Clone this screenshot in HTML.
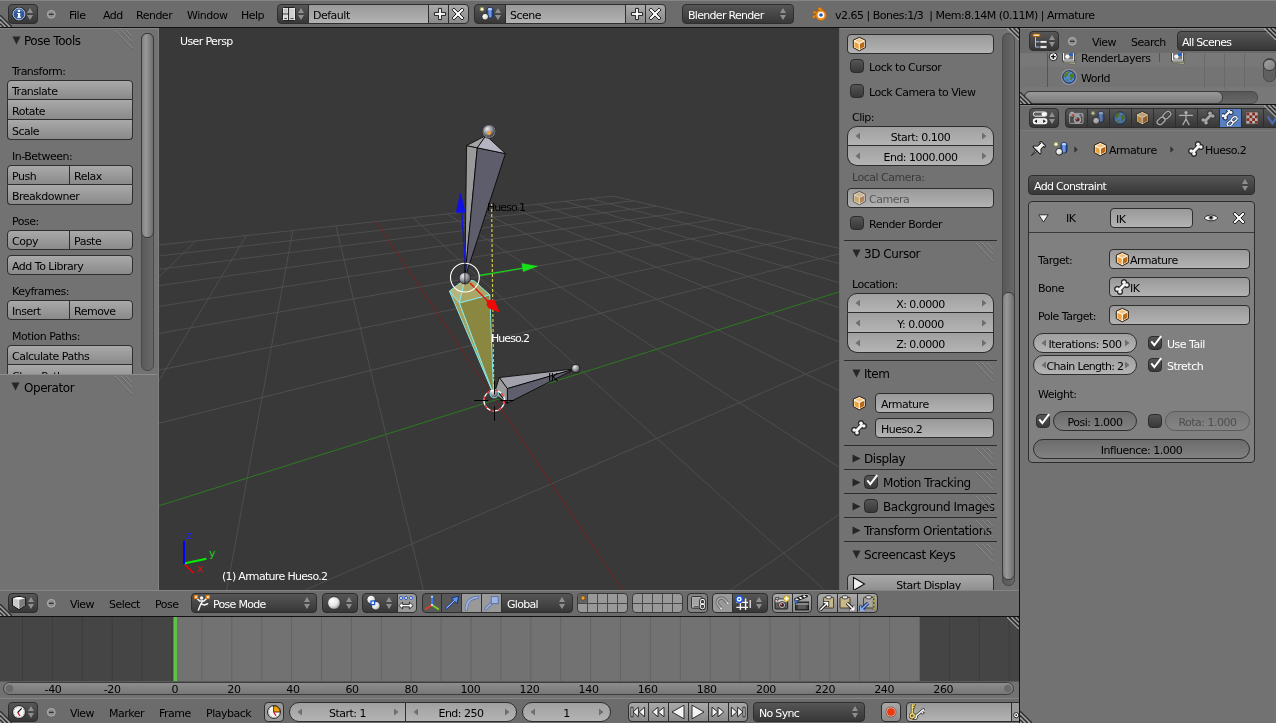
<!DOCTYPE html>
<html><head><meta charset="utf-8"><title>Blender</title>
<style>
html,body{margin:0;padding:0}
body{width:1276px;height:723px;overflow:hidden;background:#727272;position:relative;font:11px "DejaVu Sans","Liberation Sans",sans-serif;letter-spacing:-0.5px;color:#000}
.a{position:absolute;box-sizing:border-box}
.t{white-space:nowrap;line-height:20px;height:20px}
.p{font-size:12px;letter-spacing:-0.45px}
.w{border:1px solid #2e2e2e;border-radius:4px;white-space:nowrap;overflow:hidden;line-height:20px;padding-top:1px;padding-left:4px}
.tool{background:linear-gradient(#a9a9a9,#8a8a8a)}
.tog{background:#999}
.togs{background:#585858;color:#fff}
.num{background:linear-gradient(#a0a0a0,#b4b4b4);border-radius:10px;text-align:center;padding:1px 0 0 0}
.menu{background:linear-gradient(#565656,#373737);color:#fff;letter-spacing:-0.7px}
.txt{background:linear-gradient(#999,#b3b3b3)}
.chk{background:linear-gradient(#555,#383838);border:1px solid #2c2c2c;border-radius:4px}
.dis{opacity:.5}
.wh{color:#fff}
.rl{border-top-right-radius:0;border-bottom-right-radius:0}
.rr{border-top-left-radius:0;border-bottom-left-radius:0}
.rt{border-bottom-left-radius:0;border-bottom-right-radius:0}
.rb{border-top-left-radius:0;border-top-right-radius:0}
.r0{border-radius:0}
.sep{background:#5e5e5e;height:1px}
.sep2{background:#858585;height:1px}
#root{position:absolute;left:0;top:0;width:1276px;height:723px;overflow:hidden;will-change:transform}
.sld{background:linear-gradient(#6c6c6c,#818181)}
.sldd{background:linear-gradient(#787878,#848484);border-color:#5c5c5c;color:#4e4e4e}
.nt{border-top:0 !important;padding-top:2px !important}

</style></head>
<body>
<div id="root">
<svg class="a" style="left:0;top:0" width="0" height="0"><defs><radialGradient id="sg" cx="35%" cy="30%" r="80%"><stop offset="0" stop-color="#fff"/><stop offset="0.55" stop-color="#e4e4e4"/><stop offset="1" stop-color="#8a8a8a"/></radialGradient><linearGradient id="cyl" x1="0" x2="1"><stop offset="0" stop-color="#2a55b0"/><stop offset="0.5" stop-color="#7aa8ee"/><stop offset="1" stop-color="#1e3f90"/></linearGradient></defs></svg>
<div class="a " style="left:0px;top:0px;width:1276px;height:28px;background:#6c6c6c;border-top:1px solid #858585;border-bottom:1px solid #111"></div>
<div class="a w menu" style="left:8px;top:4px;width:30px;height:20px;"></div>
<svg class="a" style="left:11px;top:6px;" width="16" height="16" viewBox="0 0 16 16"><circle cx="8" cy="8" r="7" fill="#0c0c10"/><circle cx="8" cy="8" r="6" fill="#2f5a9e" stroke="#d4e0f4" stroke-width="0.9"/><path d="M3.4 6.4 A5 5 0 0 1 12.6 6.4 A8 8 0 0 0 3.4 6.4 Z" fill="#7a9ccc" opacity=".6"/><rect x="7" y="7" width="2.2" height="4.6" fill="#fff"/><rect x="6.2" y="7" width="2" height="1" fill="#fff"/><rect x="6.2" y="10.8" width="3.8" height="1" fill="#fff"/><circle cx="8" cy="4.9" r="1.2" fill="#fff"/></svg>
<svg class="a" style="left:26px;top:7px" width="8" height="14" viewBox="0 0 8 14"><path d="M4 1 L7 6 H1 Z M4 13 L7 8 H1 Z" fill="#8f8f8f"/></svg>
<svg class="a" style="left:45px;top:8px" width="12" height="12" viewBox="0 0 12 12"><circle cx="6.3" cy="6.3" r="3.9" fill="#8c8c8c" stroke="#b0b0b0" stroke-width="1"/><rect x="4" y="5.7" width="4.6" height="1.3" fill="#333"/></svg>
<div class="a t " style="left:69px;top:6px;">File</div>
<div class="a t " style="left:103px;top:6px;">Add</div>
<div class="a t " style="left:136px;top:6px;">Render</div>
<div class="a t " style="left:187px;top:6px;">Window</div>
<div class="a t " style="left:241px;top:6px;">Help</div>
<div class="a w menu rl" style="left:277px;top:4px;width:32px;height:20px;"></div>
<svg class="a" style="left:281px;top:6px;" width="16" height="16" viewBox="0 0 16 16"><rect x="1.5" y="1.5" width="13" height="13" rx="1" fill="#f4f4f4" stroke="#222" stroke-width="1"/><rect x="2.6" y="2.6" width="4" height="4.6" fill="#c4c4c4"/><rect x="2.6" y="9" width="4" height="4.4" fill="#d8d8d8"/><rect x="8.6" y="2.6" width="4.8" height="10.8" fill="#cfcfcf"/><path d="M7.6 1.5 V14.5 M1.5 8 H7.6" stroke="#222" stroke-width="1.1"/><path d="M3.2 12.6 H6 M9.4 12.6 H12.6" stroke="#333" stroke-width="0.9"/></svg>
<svg class="a" style="left:297px;top:7px" width="8" height="14" viewBox="0 0 8 14"><path d="M4 1 L7 6 H1 Z M4 13 L7 8 H1 Z" fill="#8f8f8f"/></svg>
<div class="a w txt r0" style="left:308px;top:4px;width:121px;height:20px;">Default</div>
<div class="a w tool r0" style="left:428px;top:4px;width:21px;height:20px;"></div>
<svg class="a" style="left:432px;top:6px;" width="16" height="16" viewBox="0 0 16 16"><path d="M6.6 2.4 H9.4 V6.6 H13.6 V9.4 H9.4 V13.6 H6.6 V9.4 H2.4 V6.6 H6.6 Z" fill="#fff" stroke="#1a1a1a" stroke-width="1" stroke-linejoin="round"/></svg>
<div class="a w tool rr" style="left:448px;top:4px;width:21px;height:20px;"></div>
<svg class="a" style="left:450px;top:6px;" width="16" height="16" viewBox="0 0 16 16"><path d="M3.9 2 L8 6.1 L12.1 2 L14 3.9 L9.9 8 L14 12.1 L12.1 14 L8 9.9 L3.9 14 L2 12.1 L6.1 8 L2 3.9 Z" fill="#fff" stroke="#1a1a1a" stroke-width="1" stroke-linejoin="round"/></svg>
<div class="a w menu rl" style="left:474px;top:4px;width:32px;height:20px;"></div>
<svg class="a" style="left:479px;top:6px;" width="16" height="16" viewBox="0 0 16 16"><circle cx="3" cy="3.2" r="2.4" fill="#d8d860" opacity=".45"/><circle cx="3" cy="3.2" r="1.3" fill="#ffffd8"/><rect x="8" y="1.6" width="6" height="10.4" rx="2.6" fill="url(#cyl)" stroke="#10285e" stroke-width="0.9"/><ellipse cx="11" cy="3.2" rx="2.4" ry="1.1" fill="#b8d2fa"/><circle cx="6.2" cy="10.8" r="3.4" fill="url(#sg)" stroke="#222" stroke-width="0.9"/></svg>
<svg class="a" style="left:494px;top:7px" width="8" height="14" viewBox="0 0 8 14"><path d="M4 1 L7 6 H1 Z M4 13 L7 8 H1 Z" fill="#8f8f8f"/></svg>
<div class="a w txt r0" style="left:505px;top:4px;width:121px;height:20px;">Scene</div>
<div class="a w tool r0" style="left:625px;top:4px;width:21px;height:20px;"></div>
<svg class="a" style="left:629px;top:6px;" width="16" height="16" viewBox="0 0 16 16"><path d="M6.6 2.4 H9.4 V6.6 H13.6 V9.4 H9.4 V13.6 H6.6 V9.4 H2.4 V6.6 H6.6 Z" fill="#fff" stroke="#1a1a1a" stroke-width="1" stroke-linejoin="round"/></svg>
<div class="a w tool rr" style="left:645px;top:4px;width:21px;height:20px;"></div>
<svg class="a" style="left:647px;top:6px;" width="16" height="16" viewBox="0 0 16 16"><path d="M3.9 2 L8 6.1 L12.1 2 L14 3.9 L9.9 8 L14 12.1 L12.1 14 L8 9.9 L3.9 14 L2 12.1 L6.1 8 L2 3.9 Z" fill="#fff" stroke="#1a1a1a" stroke-width="1" stroke-linejoin="round"/></svg>
<div class="a w menu" style="left:682px;top:4px;width:112px;height:20px;padding-left:5px">Blender Render</div>
<svg class="a" style="left:779px;top:7px" width="8" height="14" viewBox="0 0 8 14"><path d="M4 1 L7 6 H1 Z M4 13 L7 8 H1 Z" fill="#8f8f8f"/></svg>
<svg class="a" style="left:811px;top:6px;" width="16" height="16" viewBox="0 0 16 16"><path d="M8.6 0.9 L13.4 4.6 L11 6 L9.4 5.6 H5.6 L8.2 7.8 L2.6 12.6 L0.9 11.2 L5.4 7.6 H2 V5.2 H7.8 L6.8 2.4 Z" fill="#f08c1e" stroke="#a85a08" stroke-width="0.6"/><circle cx="10" cy="9.2" r="5.4" fill="#f08c1e" stroke="#a85a08" stroke-width="0.6"/><circle cx="10" cy="9" r="3.3" fill="#fff"/><circle cx="10" cy="9" r="1.8" fill="#2358b4"/></svg>
<div class="a t " style="left:835px;top:6px;white-space:pre">v2.65 | Bones:1/3 &nbsp;| Mem:8.14M (0.11M) | Armature</div>
<div class="a " style="left:0px;top:28px;width:159px;height:562px;background:#727272;border-top:1px solid #858585"></div>
<div class="a " style="left:158px;top:28px;width:1px;height:562px;background:#808080"></div>
<svg class="a" style="left:12px;top:36px" width="9" height="9" viewBox="0 0 9 9"><path d="M0.5 0.5 H8.5 L4.5 8.5 Z" fill="#262626"/></svg>
<div class="a t p" style="left:24px;top:31px;">Pose Tools</div>
<svg class="a" style="left:115px;top:30px" width="18" height="19" viewBox="0 0 18 19"><path d="M0 1 L17 19 M6 1 L17 12.5 M11 1 L17 7.5" stroke="#5c5c5c" stroke-width="0.9" fill="none"/><path d="M0 0 L17 18 M6 0 L17 11.5 M11 0 L17 6.5" stroke="#929292" stroke-width="0.9" fill="none"/></svg>
<div class="a t " style="left:12px;top:62px;">Transform:</div>
<div class="a w tool rt" style="left:7px;top:80px;width:126px;height:20px;">Translate</div>
<div class="a w tool r0 nt" style="left:7px;top:100px;width:126px;height:20px;">Rotate</div>
<div class="a w tool rb nt" style="left:7px;top:120px;width:126px;height:20px;">Scale</div>
<div class="a t " style="left:12px;top:147px;">In-Between:</div>
<div class="a w tool" style="left:7px;top:165px;width:63px;height:20px;border-radius:4px 0 0 0">Push</div>
<div class="a w tool" style="left:69px;top:165px;width:64px;height:20px;border-radius:0 4px 0 0">Relax</div>
<div class="a w tool rb nt" style="left:7px;top:185px;width:126px;height:20px;">Breakdowner</div>
<div class="a t " style="left:12px;top:212px;">Pose:</div>
<div class="a w tool rl" style="left:7px;top:230px;width:63px;height:20px;">Copy</div>
<div class="a w tool rr" style="left:69px;top:230px;width:64px;height:20px;">Paste</div>
<div class="a w tool " style="left:7px;top:255px;width:126px;height:20px;">Add To Library</div>
<div class="a t " style="left:12px;top:282px;">Keyframes:</div>
<div class="a w tool rl" style="left:7px;top:300px;width:63px;height:20px;">Insert</div>
<div class="a w tool rr" style="left:69px;top:300px;width:64px;height:20px;">Remove</div>
<div class="a t " style="left:12px;top:327px;">Motion Paths:</div>
<div class="a w tool rt" style="left:7px;top:345px;width:126px;height:20px;">Calculate Paths</div>
<div class="a w tool rb nt" style="left:7px;top:365px;width:126px;height:20px;">Clear Paths</div>
<div class="a " style="left:141px;top:33px;width:13px;height:338px;border:1px solid #4a4a4a;border-radius:6px;background:linear-gradient(90deg,#5a5a5a,#686868)"></div>
<div class="a " style="left:141px;top:33px;width:13px;height:205px;border:1px solid #3a3a3a;border-radius:6px;background:linear-gradient(90deg,#808080,#989898 35%,#6e6e6e)"></div>
<div class="a " style="left:0px;top:374px;width:157px;height:216px;background:#727272;border-top:1px solid #8c8c8c"></div>
<svg class="a" style="left:11px;top:382px" width="9" height="9" viewBox="0 0 9 9"><path d="M0.5 0.5 H8.5 L4.5 8.5 Z" fill="#262626"/></svg>
<div class="a t p" style="left:24px;top:378px;">Operator</div>
<svg class="a" style="left:115px;top:376px" width="18" height="19" viewBox="0 0 18 19"><path d="M0 1 L17 19 M6 1 L17 12.5 M11 1 L17 7.5" stroke="#5c5c5c" stroke-width="0.9" fill="none"/><path d="M0 0 L17 18 M6 0 L17 11.5 M11 0 L17 6.5" stroke="#929292" stroke-width="0.9" fill="none"/></svg>
<svg class="a" style="left:159px;top:28px;background:#393939" width="680" height="562" viewBox="0 0 680 562">
<path d="M-50.0 222.3 L454.1 168.1 M-50.0 233.8 L474.4 172.8 M-50.0 247.6 L497.5 178.1 M-50.0 264.6 L524.3 184.3 M-18.5 218.9 L-50.0 241.1 M-50.0 286.2 L555.6 191.5 M36.7 213.0 L-50.0 298.3 M-50.0 314.3 L592.6 200.1 M87.3 207.6 L-50.0 435.3 M-50.0 352.5 L637.1 210.4 M133.8 202.5 L58.5 612.0 M-50.0 407.6 L691.6 223.0 M176.9 197.9 L276.3 612.0 M30.0 612.0 L730.0 310.2 M253.8 189.6 L720.7 612.0 M500.0 612.0 L730.0 451.6 M288.3 185.9 L730.0 471.4 M320.5 182.5 L730.0 387.8 M350.7 179.2 L730.0 334.2 M378.9 176.2 L730.0 296.9 M405.5 173.3 L730.0 269.5 M430.5 170.6 L730.0 248.5 M454.1 168.1 L730.0 231.8" stroke="#505050" stroke-width="0.9" fill="none"/>
<path d="M216.7 193.6 L497.1 612.0" stroke="#7a1f1f" stroke-width="1" fill="none"/>
<path d="M-50.0 493.5 L730.0 248.2" stroke="#2b7a1f" stroke-width="1" fill="none"/>
<defs><radialGradient id="sph" cx="35%" cy="30%" r="75%"><stop offset="0" stop-color="#e8e8ee"/><stop offset="0.5" stop-color="#9a9aa2"/><stop offset="1" stop-color="#3a3a40"/></radialGradient></defs>
<polygon points="307.6,117.6 318.3,119.8 305.9,250.0" fill="#9a9a9a" stroke="#000" stroke-width="0.8" stroke-linejoin="round" />
<polygon points="318.3,119.8 346.4,125.6 305.9,250.0" fill="#5d5d6c" stroke="#000" stroke-width="0.8" stroke-linejoin="round" />
<polygon points="327.0,107.5 307.6,117.6 318.3,119.8" fill="#a3a3a3" stroke="#000" stroke-width="0.8" stroke-linejoin="round" />
<polygon points="327.0,107.5 318.3,119.8 346.4,125.6" fill="#b4b4c2" stroke="#000" stroke-width="0.8" stroke-linejoin="round" />
<circle cx="330.0" cy="103.4" r="6.9" fill="#8a8a92" stroke="#2a2a2a" stroke-width="0.9" />
<circle cx="330.0" cy="103.2" r="5.6" fill="url(#sph)" stroke="#55555c" stroke-width="0.6" />
<circle cx="329.9" cy="105.0" r="2.1" fill="#e8a040" stroke="none" stroke-width="1" />
<line x1="332.6" y1="176.0" x2="334.8" y2="366.0" stroke="#d6c845" stroke-width="1.2" stroke-dasharray="3 2"/>
<polygon points="290.4,263.1 300.4,274.8 334.6,366.4" fill="#a5a25e" stroke="#86e8ea" stroke-width="1" stroke-linejoin="round" />
<polygon points="300.4,274.8 330.8,266.8 334.6,366.4" fill="#8a8840" stroke="#86e8ea" stroke-width="1" stroke-linejoin="round" />
<polygon points="305.9,251.5 290.4,263.1 300.4,274.8" fill="#b8b57c" stroke="#86e8ea" stroke-width="1" stroke-linejoin="round" />
<polygon points="305.9,251.5 300.4,274.8 330.8,266.8 315.3,253.0" fill="#aaa766" stroke="#86e8ea" stroke-width="1" stroke-linejoin="round" />
<polygon points="340.3,349.6 348.3,360.6 416.4,340.8" fill="#a2a2ac" stroke="#000" stroke-width="0.8" stroke-linejoin="round" />
<polygon points="348.3,360.6 348.4,375.2 416.4,340.8" fill="#5e5e6c" stroke="#000" stroke-width="0.8" stroke-linejoin="round" />
<polygon points="336.6,361.2 340.3,349.6 348.3,360.6 348.4,375.2" fill="#9c9c9c" stroke="#000" stroke-width="0.8" stroke-linejoin="round" />
<polygon points="335.2,366.4 336.6,361.2 348.4,375.2" fill="#8a8a8a" stroke="#000" stroke-width="0.8" stroke-linejoin="round" />
<circle cx="416.8" cy="340.6" r="4.1" fill="url(#sph)" stroke="#1a1a1a" stroke-width="0.9" />
<circle cx="335.2" cy="365.6" r="4.2" fill="url(#sph)" stroke="#86e8ea" stroke-width="1" />
<circle cx="335.2" cy="372.6" r="10.3" fill="none" stroke="#fff" stroke-width="1.2" />
<circle cx="335.2" cy="372.6" r="10.3" fill="none" stroke="#e02020" stroke-width="1.2" stroke-dasharray="4 4"/>
<line x1="315.2" y1="372.5" x2="329.2" y2="372.5" stroke="#000" stroke-width="1" />
<line x1="341.4" y1="372.5" x2="355.0" y2="372.5" stroke="#000" stroke-width="1" />
<line x1="335.5" y1="378.5" x2="335.5" y2="392.8" stroke="#000" stroke-width="1" />
<line x1="335.5" y1="352.5" x2="335.5" y2="366.5" stroke="#000" stroke-width="1" />
<line x1="306.8" y1="242.0" x2="302.2" y2="177.0" stroke="#1515e8" stroke-width="1.3" />
<polygon points="301.4,165.0 297.2,184.5 306.4,184.5" fill="#1010e8" stroke="#1010e8" stroke-width="0.5" stroke-linejoin="round" />
<line x1="320.0" y1="247.5" x2="364.0" y2="240.2" stroke="#18d018" stroke-width="1.3" />
<polygon points="378.5,238.2 362.8,235.6 364.2,243.6" fill="#18e018" stroke="#18e018" stroke-width="0.5" stroke-linejoin="round" />
<line x1="311.0" y1="255.0" x2="333.0" y2="277.5" stroke="#e81010" stroke-width="1.3" />
<path d="M327.2,272.6 L335.6,272.2 L340.8,284.4 L330.5,280.8 Z" fill="#f00808"/>
<circle cx="332.3" cy="276.0" r="4.6" fill="#f00808" stroke="none" stroke-width="1" />
<circle cx="305.9" cy="250.2" r="5.8" fill="url(#sph)" stroke="#222" stroke-width="0.8" />
<circle cx="305.9" cy="249.6" r="14.4" fill="none" stroke="#fff" stroke-width="1.1" />
<line x1="305.9" y1="234.0" x2="305.9" y2="256.0" stroke="#111" stroke-width="0.8" />
<line x1="25.0" y1="535.6" x2="34.8" y2="545.2" stroke="#f00000" stroke-width="1.6" />
<line x1="25.0" y1="535.6" x2="47.4" y2="530.7" stroke="#00f000" stroke-width="2" />
<line x1="25.0" y1="536.2" x2="25.0" y2="512.8" stroke="#0000ff" stroke-width="2" />
</svg>
<div class="a t wh" style="left:180px;top:32px;letter-spacing:-0.62px">User Persp</div>
<div class="a t wh" style="left:222px;top:567px;letter-spacing:-0.68px">(1) Armature Hueso.2</div>
<div class="a t " style="left:487px;top:198px;letter-spacing:-0.95px">Hueso.1</div>
<div class="a t wh" style="left:491px;top:329px;letter-spacing:-0.95px">Hueso.2</div>
<div class="a t " style="left:548px;top:368px;">IK</div>
<div class="a t " style="left:186px;top:526px;color:#2222ff">z</div>
<div class="a t " style="left:209px;top:544px;color:#10e010">y</div>
<div class="a t " style="left:197px;top:559px;color:#e81010">x</div>
<div class="a " style="left:839px;top:28px;width:181px;height:562px;background:#727272;border-left:1px solid #6a6a6a;border-top:1px solid #858585"></div>
<div class="a " style="left:1019px;top:28px;width:1px;height:562px;background:#111"></div>
<div class="a w txt" style="left:847px;top:34px;width:147px;height:20px;"></div>
<svg class="a" style="left:851px;top:36px;" width="16" height="16" viewBox="0 0 16 16"><path d="M8.3 1.4 L14.3 4.1 V11.6 L8.3 14.8 L2.3 11.6 V4.1 Z" fill="#fff6e4" stroke="#2a1a06" stroke-width="1" stroke-linejoin="round"/><path d="M8.3 2.8 L12.5 4.7 L8.3 6.7 L4.1 4.7 Z" fill="#f7c47c"/><path d="M3.5 5.7 L7.7 7.7 V13.2 L3.5 11 Z" fill="#eda23e"/><path d="M8.9 7.7 L13.1 5.7 V11 L8.9 13.2 Z" fill="#b86a1a"/></svg>
<div class="a chk" style="left:850px;top:59px;width:14px;height:14px;"></div>
<div class="a t " style="left:869px;top:58px;">Lock to Cursor</div>
<div class="a chk" style="left:850px;top:84px;width:14px;height:14px;"></div>
<div class="a t " style="left:869px;top:83px;">Lock Camera to View</div>
<div class="a t " style="left:852px;top:108px;">Clip:</div>
<div class="a w num rt" style="left:847px;top:126px;width:147px;height:20px;">Start: 0.100</div>
<svg class="a" style="left:854.5px;top:132px" width="6" height="8" viewBox="0 0 6 8"><path d="M5 0.5 V7.5 L0.5 4 Z" fill="#6e6e6e"/></svg>
<svg class="a" style="left:981px;top:132px" width="6" height="8" viewBox="0 0 6 8"><path d="M1 0.5 V7.5 L5.5 4 Z" fill="#6e6e6e"/></svg>
<div class="a w num rb nt" style="left:847px;top:146px;width:147px;height:20px;">End: 1000.000</div>
<svg class="a" style="left:854.5px;top:152px" width="6" height="8" viewBox="0 0 6 8"><path d="M5 0.5 V7.5 L0.5 4 Z" fill="#6e6e6e"/></svg>
<svg class="a" style="left:981px;top:152px" width="6" height="8" viewBox="0 0 6 8"><path d="M1 0.5 V7.5 L5.5 4 Z" fill="#6e6e6e"/></svg>
<div class="a t dis" style="left:852px;top:168px;">Local Camera:</div>
<div class="a w txt" style="left:847px;top:188px;width:147px;height:20px;"><span class="dis" style="margin-left:17px">Camera</span></div>
<svg class="a" style="left:851px;top:190px;opacity:.55" width="16" height="16" viewBox="0 0 16 16"><path d="M8.3 1.4 L14.3 4.1 V11.6 L8.3 14.8 L2.3 11.6 V4.1 Z" fill="#fff6e4" stroke="#2a1a06" stroke-width="1" stroke-linejoin="round"/><path d="M8.3 2.8 L12.5 4.7 L8.3 6.7 L4.1 4.7 Z" fill="#f7c47c"/><path d="M3.5 5.7 L7.7 7.7 V13.2 L3.5 11 Z" fill="#eda23e"/><path d="M8.9 7.7 L13.1 5.7 V11 L8.9 13.2 Z" fill="#b86a1a"/></svg>
<div class="a chk" style="left:850px;top:216px;width:14px;height:14px;"></div>
<div class="a t " style="left:869px;top:215px;">Render Border</div>
<div class="a " style="left:844px;top:240px;width:153px;height:1px;background:#2c2c2c"></div>
<svg class="a" style="left:852px;top:249px" width="9" height="9" viewBox="0 0 9 9"><path d="M0.5 0.5 H8.5 L4.5 8.5 Z" fill="#262626"/></svg>
<div class="a t p" style="left:864px;top:244px;">3D Cursor</div>
<svg class="a" style="left:976px;top:243px" width="18" height="19" viewBox="0 0 18 19"><path d="M0 1 L17 19 M6 1 L17 12.5 M11 1 L17 7.5" stroke="#5c5c5c" stroke-width="0.9" fill="none"/><path d="M0 0 L17 18 M6 0 L17 11.5 M11 0 L17 6.5" stroke="#929292" stroke-width="0.9" fill="none"/></svg>
<div class="a t " style="left:852px;top:275px;">Location:</div>
<div class="a w num rt" style="left:847px;top:293px;width:147px;height:20px;">X: 0.0000</div>
<svg class="a" style="left:854.5px;top:299px" width="6" height="8" viewBox="0 0 6 8"><path d="M5 0.5 V7.5 L0.5 4 Z" fill="#6e6e6e"/></svg>
<svg class="a" style="left:981px;top:299px" width="6" height="8" viewBox="0 0 6 8"><path d="M1 0.5 V7.5 L5.5 4 Z" fill="#6e6e6e"/></svg>
<div class="a w num r0 nt" style="left:847px;top:313px;width:147px;height:20px;">Y: 0.0000</div>
<svg class="a" style="left:854.5px;top:319px" width="6" height="8" viewBox="0 0 6 8"><path d="M5 0.5 V7.5 L0.5 4 Z" fill="#6e6e6e"/></svg>
<svg class="a" style="left:981px;top:319px" width="6" height="8" viewBox="0 0 6 8"><path d="M1 0.5 V7.5 L5.5 4 Z" fill="#6e6e6e"/></svg>
<div class="a w num rb nt" style="left:847px;top:333px;width:147px;height:20px;">Z: 0.0000</div>
<svg class="a" style="left:854.5px;top:339px" width="6" height="8" viewBox="0 0 6 8"><path d="M5 0.5 V7.5 L0.5 4 Z" fill="#6e6e6e"/></svg>
<svg class="a" style="left:981px;top:339px" width="6" height="8" viewBox="0 0 6 8"><path d="M1 0.5 V7.5 L5.5 4 Z" fill="#6e6e6e"/></svg>
<div class="a " style="left:844px;top:360px;width:153px;height:1px;background:#2c2c2c"></div>
<svg class="a" style="left:852px;top:369px" width="9" height="9" viewBox="0 0 9 9"><path d="M0.5 0.5 H8.5 L4.5 8.5 Z" fill="#262626"/></svg>
<div class="a t p" style="left:864px;top:364px;">Item</div>
<svg class="a" style="left:976px;top:363px" width="18" height="19" viewBox="0 0 18 19"><path d="M0 1 L17 19 M6 1 L17 12.5 M11 1 L17 7.5" stroke="#5c5c5c" stroke-width="0.9" fill="none"/><path d="M0 0 L17 18 M6 0 L17 11.5 M11 0 L17 6.5" stroke="#929292" stroke-width="0.9" fill="none"/></svg>
<svg class="a" style="left:851px;top:395px;" width="16" height="16" viewBox="0 0 16 16"><path d="M8.3 1.4 L14.3 4.1 V11.6 L8.3 14.8 L2.3 11.6 V4.1 Z" fill="#fff6e4" stroke="#2a1a06" stroke-width="1" stroke-linejoin="round"/><path d="M8.3 2.8 L12.5 4.7 L8.3 6.7 L4.1 4.7 Z" fill="#f7c47c"/><path d="M3.5 5.7 L7.7 7.7 V13.2 L3.5 11 Z" fill="#eda23e"/><path d="M8.9 7.7 L13.1 5.7 V11 L8.9 13.2 Z" fill="#b86a1a"/></svg>
<div class="a w txt" style="left:875px;top:393px;width:119px;height:20px;padding-left:5px">Armature</div>
<svg class="a" style="left:851px;top:420px;" width="16" height="16" viewBox="0 0 16 16"><g fill="#2a2a2a" stroke="#2a2a2a"><line x1="4.6" y1="11.4" x2="11.4" y2="4.6" stroke-width="4.6"/><circle cx="3.2" cy="10" r="2.7"/><circle cx="6" cy="12.8" r="2.7"/><circle cx="10" cy="3.2" r="2.7"/><circle cx="12.8" cy="6" r="2.7"/></g><g fill="#f4f4f4" stroke="#f4f4f4"><line x1="4.6" y1="11.4" x2="11.4" y2="4.6" stroke-width="2.8"/><circle cx="3.2" cy="10" r="1.8" stroke="none"/><circle cx="6" cy="12.8" r="1.8" stroke="none"/><circle cx="10" cy="3.2" r="1.8" stroke="none"/><circle cx="12.8" cy="6" r="1.8" stroke="none"/></g></svg>
<div class="a w txt" style="left:875px;top:418px;width:119px;height:20px;padding-left:5px">Hueso.2</div>
<div class="a " style="left:844px;top:445px;width:153px;height:1px;background:#2c2c2c"></div>
<svg class="a" style="left:852px;top:454px" width="9" height="9" viewBox="0 0 9 9"><path d="M0.5 0.5 V8.5 L8.5 4.5 Z" fill="#262626"/></svg>
<div class="a t p" style="left:864px;top:449px;">Display</div>
<svg class="a" style="left:976px;top:448px" width="18" height="19" viewBox="0 0 18 19"><path d="M0 1 L17 19 M6 1 L17 12.5 M11 1 L17 7.5" stroke="#5c5c5c" stroke-width="0.9" fill="none"/><path d="M0 0 L17 18 M6 0 L17 11.5 M11 0 L17 6.5" stroke="#929292" stroke-width="0.9" fill="none"/></svg>
<div class="a " style="left:844px;top:469px;width:153px;height:1px;background:#2c2c2c"></div>
<svg class="a" style="left:852px;top:478px" width="9" height="9" viewBox="0 0 9 9"><path d="M0.5 0.5 V8.5 L8.5 4.5 Z" fill="#262626"/></svg>
<div class="a chk" style="left:864px;top:475px;width:14px;height:14px;"></div>
<svg class="a" style="left:864px;top:471px" width="16" height="18" viewBox="0 0 16 18"><path d="M3.3 9.4 L6.3 13.2 L13.2 4.2" stroke="#fff" stroke-width="1.9" fill="none" stroke-linejoin="miter"/></svg>
<div class="a t p" style="left:883px;top:473px;">Motion Tracking</div>
<svg class="a" style="left:976px;top:472px" width="18" height="19" viewBox="0 0 18 19"><path d="M0 1 L17 19 M6 1 L17 12.5 M11 1 L17 7.5" stroke="#5c5c5c" stroke-width="0.9" fill="none"/><path d="M0 0 L17 18 M6 0 L17 11.5 M11 0 L17 6.5" stroke="#929292" stroke-width="0.9" fill="none"/></svg>
<div class="a " style="left:844px;top:493px;width:153px;height:1px;background:#2c2c2c"></div>
<svg class="a" style="left:852px;top:502px" width="9" height="9" viewBox="0 0 9 9"><path d="M0.5 0.5 V8.5 L8.5 4.5 Z" fill="#262626"/></svg>
<div class="a chk" style="left:864px;top:499px;width:14px;height:14px;"></div>
<div class="a t p" style="left:883px;top:497px;">Background Images</div>
<svg class="a" style="left:976px;top:496px" width="18" height="19" viewBox="0 0 18 19"><path d="M0 1 L17 19 M6 1 L17 12.5 M11 1 L17 7.5" stroke="#5c5c5c" stroke-width="0.9" fill="none"/><path d="M0 0 L17 18 M6 0 L17 11.5 M11 0 L17 6.5" stroke="#929292" stroke-width="0.9" fill="none"/></svg>
<div class="a " style="left:844px;top:517px;width:153px;height:1px;background:#2c2c2c"></div>
<svg class="a" style="left:852px;top:526px" width="9" height="9" viewBox="0 0 9 9"><path d="M0.5 0.5 V8.5 L8.5 4.5 Z" fill="#262626"/></svg>
<div class="a t p" style="left:864px;top:521px;">Transform Orientations</div>
<svg class="a" style="left:976px;top:520px" width="18" height="19" viewBox="0 0 18 19"><path d="M0 1 L17 19 M6 1 L17 12.5 M11 1 L17 7.5" stroke="#5c5c5c" stroke-width="0.9" fill="none"/><path d="M0 0 L17 18 M6 0 L17 11.5 M11 0 L17 6.5" stroke="#929292" stroke-width="0.9" fill="none"/></svg>
<div class="a " style="left:844px;top:541px;width:153px;height:1px;background:#2c2c2c"></div>
<svg class="a" style="left:852px;top:550px" width="9" height="9" viewBox="0 0 9 9"><path d="M0.5 0.5 H8.5 L4.5 8.5 Z" fill="#262626"/></svg>
<div class="a t p" style="left:864px;top:545px;">Screencast Keys</div>
<svg class="a" style="left:976px;top:544px" width="18" height="19" viewBox="0 0 18 19"><path d="M0 1 L17 19 M6 1 L17 12.5 M11 1 L17 7.5" stroke="#5c5c5c" stroke-width="0.9" fill="none"/><path d="M0 0 L17 18 M6 0 L17 11.5 M11 0 L17 6.5" stroke="#929292" stroke-width="0.9" fill="none"/></svg>
<div class="a w tool" style="left:847px;top:574px;width:147px;height:20px;text-align:center;padding-left:16px">Start Display</div>
<svg class="a" style="left:851px;top:576px;" width="16" height="16" viewBox="0 0 16 16"><path d="M2.5 1.5 V14.5 L13.5 8 Z" fill="#f0f0f0" stroke="#111" stroke-width="1.1"/></svg>
<div class="a " style="left:1002px;top:33px;width:13px;height:553px;border:1px solid #4a4a4a;border-radius:6px;background:linear-gradient(90deg,#585858,#676767)"></div>
<div class="a " style="left:1002px;top:292px;width:13px;height:288px;border:1px solid #3a3a3a;border-radius:6px;background:linear-gradient(90deg,#808080,#989898 35%,#6e6e6e)"></div>
<div class="a " style="left:1020px;top:28px;width:256px;height:25px;background:#6c6c6c;border-top:1px solid #858585"></div>
<div class="a w menu" style="left:1029px;top:31px;width:30px;height:20px;"></div>
<svg class="a" style="left:1032px;top:33px;" width="16" height="16" viewBox="0 0 16 16"><path d="M3.5 4 V14 H8 M3.5 8.8 H8" stroke="#a8c4ee" stroke-width="1" fill="none"/><rect x="0.6" y="0.8" width="7.6" height="3" rx="0.6" fill="#f0961e" stroke="#7a4608" stroke-width="0.7"/><path d="M2 2.2 H7" stroke="#fff" stroke-width="1"/><rect x="8" y="7.4" width="7" height="2.8" rx="0.6" fill="#f4f4f4" stroke="#222" stroke-width="0.7"/><rect x="8" y="12.6" width="7" height="2.8" rx="0.6" fill="#f4f4f4" stroke="#222" stroke-width="0.7"/></svg>
<svg class="a" style="left:1048px;top:34px" width="8" height="14" viewBox="0 0 8 14"><path d="M4 1 L7 6 H1 Z M4 13 L7 8 H1 Z" fill="#8f8f8f"/></svg>
<svg class="a" style="left:1066px;top:35px" width="12" height="12" viewBox="0 0 12 12"><circle cx="6.3" cy="6.3" r="3.9" fill="#8c8c8c" stroke="#b0b0b0" stroke-width="1"/><rect x="4" y="5.7" width="4.6" height="1.3" fill="#333"/></svg>
<div class="a t " style="left:1092px;top:33px;">View</div>
<div class="a t " style="left:1131px;top:33px;">Search</div>
<div class="a w menu" style="left:1177px;top:31px;width:110px;height:20px;padding-left:4px">All Scenes</div>
<div class="a" style="left:1020px;top:53px;width:256px;height:51px;overflow:hidden;background:#787878">
<div class="a " style="left:0px;top:14px;width:256px;height:20px;background:#747474"></div>
<div class="a " style="left:27px;top:0px;width:1px;height:34px;background:#555"></div>
<div class="a " style="left:184px;top:0px;width:1px;height:36px;background:#6a6a6a"></div>
<div class="a " style="left:204px;top:0px;width:1px;height:36px;background:#6a6a6a"></div>
<div class="a " style="left:224px;top:0px;width:1px;height:36px;background:#6a6a6a"></div>
<div class="a t " style="left:61px;top:-4px;">RenderLayers</div>
<div class="a t " style="left:61px;top:16px;">World</div>
<div class="a " style="left:139px;top:0px;width:1px;height:9px;background:#555"></div>
<svg class="a" style="left:28px;top:-3px;" width="16" height="16" viewBox="0 0 16 16"><circle cx="5.3" cy="6.7" r="4" fill="#f2f2f2" stroke="#1a1a1a" stroke-width="1"/><path d="M3 6.7 H7.6 M5.3 4.4 V9" stroke="#111" stroke-width="1.3"/></svg>
<svg class="a" style="left:41px;top:-4px;" width="16" height="16" viewBox="0 0 16 16"><path d="M3 6 L15.4 5 L14.4 15.2 L2.6 14.2 Z" fill="#d8d0b0" stroke="#5a5a48" stroke-width="0.7"/><path d="M2.4 4.6 L14.6 4.2 L14 13.6 L2.4 13.4 Z" fill="#e8e8e0" stroke="#4a4a4a" stroke-width="0.7"/><rect x="1.6" y="2" width="12" height="10" fill="#fafafa" stroke="#2a2a2a" stroke-width="0.8"/><rect x="3" y="3.4" width="9.2" height="7.2" fill="#787878"/><circle cx="6.4" cy="7.6" r="2.2" fill="#f4f4f4"/><rect x="8.2" y="3.6" width="3.6" height="3.4" fill="#2a62c8"/></svg>
<svg class="a" style="left:150px;top:-4px;" width="16" height="16" viewBox="0 0 16 16"><path d="M3 6 L15.4 5 L14.4 15.2 L2.6 14.2 Z" fill="#d8d0b0" stroke="#5a5a48" stroke-width="0.7"/><path d="M2.4 4.6 L14.6 4.2 L14 13.6 L2.4 13.4 Z" fill="#e8e8e0" stroke="#4a4a4a" stroke-width="0.7"/><rect x="1.6" y="2" width="12" height="10" fill="#fafafa" stroke="#2a2a2a" stroke-width="0.8"/><rect x="3" y="3.4" width="9.2" height="7.2" fill="#787878"/><circle cx="6.4" cy="7.6" r="2.2" fill="#f4f4f4"/><rect x="8.2" y="3.6" width="3.6" height="3.4" fill="#2a62c8"/></svg>
<svg class="a" style="left:41px;top:16px;" width="16" height="16" viewBox="0 0 16 16"><circle cx="8" cy="8" r="8" fill="#a0a0b6" opacity=".7"/><circle cx="8" cy="8" r="6.2" fill="#4f88cf" stroke="#0e2048" stroke-width="1"/><path d="M3 6 C3.6 4 5.4 2.8 7.4 2.6 L8.4 3.8 L7 4.6 L7.2 6 L5.8 6.6 L5.2 8.6 L3.8 8.8 Z M9.6 5 L11.8 4.6 L13 6.4 L12.6 8.6 L11 9.4 L10.2 11.6 L9 10.8 L9.6 8.2 L8.6 6.8 Z M5.6 10 L7.2 10.6 L6.8 12.6 L5.4 12 Z" fill="#4e7a1c"/><path d="M3 7 A5.2 5.2 0 0 1 9 2.6 A7 7 0 0 0 3 7 Z" fill="#fff" opacity=".55"/></svg>
</div>
<div class="a " style="left:1263px;top:58px;width:13px;height:24px;border:1px solid #4a4a4a;border-radius:6px;background:#606060"></div>
<div class="a " style="left:1263px;top:59px;width:13px;height:12px;border:1px solid #3a3a3a;border-radius:6px;background:linear-gradient(135deg,#a2a2a2,#808080)"></div>
<svg class="a" style="left:1264px;top:28px" width="12" height="12" viewBox="0 0 12 12"><path d="M0 0 L12 12" stroke="#a2a2a2" stroke-width="1.3"/><path d="M2.2 0 L12 9.8" stroke="#2c2c2c" stroke-width="1.3"/><path d="M4.4 0 L12 7.6" stroke="#a2a2a2" stroke-width="1.3"/><path d="M6.6 0 L12 5.4" stroke="#2c2c2c" stroke-width="1.3"/><path d="M8.8 0 L12 3.1999999999999993" stroke="#a2a2a2" stroke-width="1.3"/><path d="M10.6 0 L12 1.4000000000000004" stroke="#2c2c2c" stroke-width="1.3"/></svg>
<div class="a " style="left:1024px;top:91px;width:234px;height:13px;border:1px solid #4a4a4a;border-radius:6px;background:linear-gradient(#585858,#676767)"></div>
<div class="a " style="left:1024px;top:91px;width:199px;height:13px;border:1px solid #3a3a3a;border-radius:6px;background:linear-gradient(#999,#7b7b7b)"></div>
<div class="a " style="left:1020px;top:104px;width:256px;height:1px;background:#111"></div>
<div class="a " style="left:1020px;top:105px;width:256px;height:25px;background:#6c6c6c;border-top:1px solid #858585"></div>
<div class="a " style="left:1020px;top:130px;width:256px;height:593px;background:#727272;border-top:1px solid #7c7c7c"></div>
<div class="a w menu" style="left:1029px;top:108px;width:30px;height:20px;"></div>
<svg class="a" style="left:1032px;top:110px;" width="16" height="16" viewBox="0 0 16 16"><rect x="1.4" y="2" width="13.4" height="4.2" rx="2" fill="#5a5a5a" stroke="#eee" stroke-width="1"/><rect x="9.6" y="2.2" width="5" height="3.8" rx="1.6" fill="#fafafa"/><rect x="1.4" y="8.8" width="13.4" height="5" rx="2.2" fill="#e8e8e8" stroke="#fff" stroke-width="1.1"/><path d="M2.4 11.3 L5 9.6 V13 Z M13.8 11.3 L11.2 9.6 V13 Z" fill="#111"/></svg>
<svg class="a" style="left:1048px;top:111px" width="8" height="14" viewBox="0 0 8 14"><path d="M4 1 L7 6 H1 Z M4 13 L7 8 H1 Z" fill="#8f8f8f"/></svg>
<div class="a w" style="left:1065px;top:108px;width:23px;height:20px;border-radius:4px 0 0 4px;background:linear-gradient(#565656,#373737);padding:0"></div>
<svg class="a" style="left:1068px;top:110px;" width="16" height="16" viewBox="0 0 16 16"><rect x="1.6" y="3.4" width="13.4" height="10" rx="0.8" fill="#4a4a4a" stroke="#a8a8a8" stroke-width="0.9"/><rect x="1.6" y="3.4" width="13.4" height="3" fill="#9a9a9a"/><rect x="2.4" y="1.8" width="3.2" height="1.6" fill="#b0b0b0"/><circle cx="5" cy="5" r="0.9" fill="#e02020"/><rect x="11.6" y="4.2" width="2.2" height="1.4" fill="#3a4a7a"/><circle cx="9.4" cy="9.6" r="3.4" fill="#8a8a8a" stroke="#bcbcbc" stroke-width="0.8"/><circle cx="9.4" cy="9.6" r="2" fill="#5a2a2a"/><circle cx="8.6" cy="8.8" r="0.8" fill="#c0a0a0"/></svg>
<div class="a w" style="left:1087px;top:108px;width:23px;height:20px;border-radius:0;background:linear-gradient(#565656,#373737);padding:0"></div>
<svg class="a" style="left:1090px;top:110px;" width="16" height="16" viewBox="0 0 16 16"><g opacity=".62"><circle cx="3" cy="3.2" r="2.4" fill="#d8d860" opacity=".45"/><circle cx="3" cy="3.2" r="1.3" fill="#ffffd8"/><rect x="8" y="1.6" width="6" height="10.4" rx="2.6" fill="url(#cyl)" stroke="#10285e" stroke-width="0.9"/><ellipse cx="11" cy="3.2" rx="2.4" ry="1.1" fill="#b8d2fa"/><circle cx="6.2" cy="10.8" r="3.4" fill="url(#sg)" stroke="#222" stroke-width="0.9"/></g></svg>
<div class="a w" style="left:1109px;top:108px;width:23px;height:20px;border-radius:0;background:linear-gradient(#565656,#373737);padding:0"></div>
<svg class="a" style="left:1112px;top:110px;" width="16" height="16" viewBox="0 0 16 16"><g opacity=".7"><circle cx="8" cy="8" r="6.2" fill="#4f88cf" stroke="#0e2048" stroke-width="1"/><path d="M3 6 C3.6 4 5.4 2.8 7.4 2.6 L8.4 3.8 L7 4.6 L7.2 6 L5.8 6.6 L5.2 8.6 L3.8 8.8 Z M9.6 5 L11.8 4.6 L13 6.4 L12.6 8.6 L11 9.4 L10.2 11.6 L9 10.8 L9.6 8.2 L8.6 6.8 Z M5.6 10 L7.2 10.6 L6.8 12.6 L5.4 12 Z" fill="#4e7a1c"/></g></svg>
<div class="a w" style="left:1131px;top:108px;width:23px;height:20px;border-radius:0;background:linear-gradient(#565656,#373737);padding:0"></div>
<svg class="a" style="left:1134px;top:110px;" width="16" height="16" viewBox="0 0 16 16"><g opacity=".68"><path d="M8.3 1.4 L14.3 4.1 V11.6 L8.3 14.8 L2.3 11.6 V4.1 Z" fill="#fff6e4" stroke="#2a1a06" stroke-width="1" stroke-linejoin="round"/><path d="M8.3 2.8 L12.5 4.7 L8.3 6.7 L4.1 4.7 Z" fill="#f7c47c"/><path d="M3.5 5.7 L7.7 7.7 V13.2 L3.5 11 Z" fill="#eda23e"/><path d="M8.9 7.7 L13.1 5.7 V11 L8.9 13.2 Z" fill="#b86a1a"/></g></svg>
<div class="a w" style="left:1153px;top:108px;width:23px;height:20px;border-radius:0;background:linear-gradient(#565656,#373737);padding:0"></div>
<svg class="a" style="left:1156px;top:110px;" width="16" height="16" viewBox="0 0 16 16"><g fill="none" stroke-linecap="round"><g stroke="#3a3a3a" stroke-width="2.9"><rect x="0.8" y="8.2" width="8.6" height="5.4" rx="2.7" transform="rotate(-42 5.1 10.9)"/><rect x="6.6" y="2.4" width="8.6" height="5.4" rx="2.7" transform="rotate(-42 10.9 5.1)"/></g><g stroke="#a4a4a4" stroke-width="1.4"><rect x="0.8" y="8.2" width="8.6" height="5.4" rx="2.7" transform="rotate(-42 5.1 10.9)"/><rect x="6.6" y="2.4" width="8.6" height="5.4" rx="2.7" transform="rotate(-42 10.9 5.1)"/></g></g></svg>
<div class="a w" style="left:1175px;top:108px;width:23px;height:20px;border-radius:0;background:linear-gradient(#565656,#373737);padding:0"></div>
<svg class="a" style="left:1178px;top:110px;" width="16" height="16" viewBox="0 0 16 16"><g stroke="#b0b0b0" stroke-width="1.2" fill="none" stroke-linecap="round"><path d="M1.6 5.4 H14.4 M8 4.6 V9 M8 9 L5 14.6 M8 9 L11 14.6"/></g><circle cx="8" cy="2.6" r="1.5" fill="#b8b8b8"/></svg>
<div class="a w" style="left:1197px;top:108px;width:23px;height:20px;border-radius:0;background:linear-gradient(#565656,#373737);padding:0"></div>
<svg class="a" style="left:1200px;top:110px;" width="16" height="16" viewBox="0 0 16 16"><g fill="#3c3c3c" stroke="#3c3c3c"><line x1="4.6" y1="11.4" x2="11.4" y2="4.6" stroke-width="4.6"/><circle cx="3.2" cy="10" r="2.7"/><circle cx="6" cy="12.8" r="2.7"/><circle cx="10" cy="3.2" r="2.7"/><circle cx="12.8" cy="6" r="2.7"/></g><g fill="#a6a6a6" stroke="#a6a6a6"><line x1="4.6" y1="11.4" x2="11.4" y2="4.6" stroke-width="2.8"/><circle cx="3.2" cy="10" r="1.8" stroke="none"/><circle cx="6" cy="12.8" r="1.8" stroke="none"/><circle cx="10" cy="3.2" r="1.8" stroke="none"/><circle cx="12.8" cy="6" r="1.8" stroke="none"/></g></svg>
<div class="a w" style="left:1219px;top:108px;width:23px;height:20px;border-radius:0;background:#5680c2;padding:0"></div>
<svg class="a" style="left:1222px;top:110px;" width="16" height="16" viewBox="0 0 16 16"><g transform="translate(-1.5,-2.5) scale(0.82)"><g fill="#26304a" stroke="#26304a"><line x1="4.6" y1="11.4" x2="11.4" y2="4.6" stroke-width="4.6"/><circle cx="3.2" cy="10" r="2.7"/><circle cx="6" cy="12.8" r="2.7"/><circle cx="10" cy="3.2" r="2.7"/><circle cx="12.8" cy="6" r="2.7"/></g><g fill="#f6f6f6" stroke="#f6f6f6"><line x1="4.6" y1="11.4" x2="11.4" y2="4.6" stroke-width="2.8"/><circle cx="3.2" cy="10" r="1.8" stroke="none"/><circle cx="6" cy="12.8" r="1.8" stroke="none"/><circle cx="10" cy="3.2" r="1.8" stroke="none"/><circle cx="12.8" cy="6" r="1.8" stroke="none"/></g></g><g transform="translate(4.4,5.6) scale(0.72)"><g fill="none" stroke-linecap="round"><g stroke="#1e2a48" stroke-width="3.4"><rect x="0.8" y="8.2" width="8.6" height="5.4" rx="2.7" transform="rotate(-42 5.1 10.9)"/><rect x="6.6" y="2.4" width="8.6" height="5.4" rx="2.7" transform="rotate(-42 10.9 5.1)"/></g><g stroke="#f6f6f6" stroke-width="1.9"><rect x="0.8" y="8.2" width="8.6" height="5.4" rx="2.7" transform="rotate(-42 5.1 10.9)"/><rect x="6.6" y="2.4" width="8.6" height="5.4" rx="2.7" transform="rotate(-42 10.9 5.1)"/></g></g></g></svg>
<div class="a w" style="left:1241px;top:108px;width:23px;height:20px;border-radius:0;background:linear-gradient(#565656,#373737);padding:0"></div>
<svg class="a" style="left:1244px;top:110px;" width="16" height="16" viewBox="0 0 16 16"><rect x="2" y="2" width="12" height="12" fill="#b4b4b4" stroke="#4a4a4a" stroke-width="0.8"/><g fill="#8a2a1e"><rect x="2.6" y="2.6" width="2.8" height="2.8"/><rect x="8.2" y="2.6" width="2.8" height="2.8"/><rect x="5.4" y="5.4" width="2.8" height="2.8"/><rect x="11" y="5.4" width="2.6" height="2.8"/><rect x="2.6" y="8.2" width="2.8" height="2.8"/><rect x="8.2" y="8.2" width="2.8" height="2.8"/><rect x="5.4" y="11" width="2.8" height="2.6"/><rect x="11" y="11" width="2.6" height="2.6"/></g></svg>
<div class="a w" style="left:1263px;top:108px;width:23px;height:20px;border-radius:0;background:linear-gradient(#565656,#373737);padding:0"></div>
<svg class="a" style="left:1266px;top:110px;" width="16" height="16" viewBox="0 0 16 16"><path d="M1.6 6.4 L6.4 13.4 L14.6 1.6" stroke="#4a6ab0" stroke-width="2.4" fill="none" stroke-linejoin="miter"/></svg>
<svg class="a" style="left:1030px;top:141px;" width="16" height="16" viewBox="0 0 16 16"><g transform="translate(8 8) scale(1.16) rotate(45) translate(-8 -8)"><path d="M5 1.4 H11 V3 H9.9 V6.4 L12.4 8.6 V9.8 H3.6 V8.6 L6.1 6.4 V3 H5 Z" fill="#ececec" stroke="#1c1c1c" stroke-width="0.85" stroke-linejoin="round"/><path d="M7.3 9.8 L8 16 L8.7 9.8 Z" fill="#e2e2e2" stroke="#1c1c1c" stroke-width="0.75"/><path d="M7.2 3.2 V7" stroke="#fff" stroke-width="1"/></g></svg>
<svg class="a" style="left:1053px;top:141px;" width="16" height="16" viewBox="0 0 16 16"><circle cx="3" cy="3.2" r="2.4" fill="#d8d860" opacity=".45"/><circle cx="3" cy="3.2" r="1.3" fill="#ffffd8"/><rect x="8" y="1.6" width="6" height="10.4" rx="2.6" fill="url(#cyl)" stroke="#10285e" stroke-width="0.9"/><ellipse cx="11" cy="3.2" rx="2.4" ry="1.1" fill="#b8d2fa"/><circle cx="6.2" cy="10.8" r="3.4" fill="url(#sg)" stroke="#222" stroke-width="0.9"/></svg>
<svg class="a" style="left:1074px;top:145.5px" width="4" height="7" viewBox="0 0 4 7"><path d="M0.3 0.2 V6.8 L3.8 3.5 Z" fill="#333"/></svg>
<svg class="a" style="left:1092px;top:141px;" width="16" height="16" viewBox="0 0 16 16"><path d="M8.3 1.4 L14.3 4.1 V11.6 L8.3 14.8 L2.3 11.6 V4.1 Z" fill="#fff6e4" stroke="#2a1a06" stroke-width="1" stroke-linejoin="round"/><path d="M8.3 2.8 L12.5 4.7 L8.3 6.7 L4.1 4.7 Z" fill="#f7c47c"/><path d="M3.5 5.7 L7.7 7.7 V13.2 L3.5 11 Z" fill="#eda23e"/><path d="M8.9 7.7 L13.1 5.7 V11 L8.9 13.2 Z" fill="#b86a1a"/></svg>
<div class="a t " style="left:1109px;top:141px;">Armature</div>
<svg class="a" style="left:1170px;top:145.5px" width="4" height="7" viewBox="0 0 4 7"><path d="M0.3 0.2 V6.8 L3.8 3.5 Z" fill="#333"/></svg>
<svg class="a" style="left:1188px;top:141px;" width="16" height="16" viewBox="0 0 16 16"><g fill="#2a2a2a" stroke="#2a2a2a"><line x1="4.6" y1="11.4" x2="11.4" y2="4.6" stroke-width="4.6"/><circle cx="3.2" cy="10" r="2.7"/><circle cx="6" cy="12.8" r="2.7"/><circle cx="10" cy="3.2" r="2.7"/><circle cx="12.8" cy="6" r="2.7"/></g><g fill="#f4f4f4" stroke="#f4f4f4"><line x1="4.6" y1="11.4" x2="11.4" y2="4.6" stroke-width="2.8"/><circle cx="3.2" cy="10" r="1.8" stroke="none"/><circle cx="6" cy="12.8" r="1.8" stroke="none"/><circle cx="10" cy="3.2" r="1.8" stroke="none"/><circle cx="12.8" cy="6" r="1.8" stroke="none"/></g></svg>
<div class="a t " style="left:1205px;top:141px;">Hueso.2</div>
<div class="a w menu" style="left:1028px;top:175px;width:227px;height:20px;padding-left:5px">Add Constraint</div>
<svg class="a" style="left:1241px;top:178px" width="8" height="14" viewBox="0 0 8 14"><path d="M4 1 L7 6 H1 Z M4 13 L7 8 H1 Z" fill="#8f8f8f"/></svg>
<div class="a " style="left:1028px;top:201px;width:227px;height:262px;border:1px solid #2e2e2e;border-radius:4px;background:#808080"></div>
<div class="a " style="left:1029px;top:232px;width:225px;height:1px;background:#3a3a3a"></div>
<svg class="a" style="left:1038px;top:214px" width="11" height="9" viewBox="0 0 11 9"><path d="M0.8 0.8 H10.2 L5.5 8 Z" fill="#f2f2f2" stroke="#222" stroke-width="0.9"/></svg>
<div class="a t " style="left:1066px;top:209px;">IK</div>
<div class="a w txt" style="left:1110px;top:208px;width:83px;height:20px;padding-left:5px">IK</div>
<svg class="a" style="left:1203px;top:210px;" width="16" height="16" viewBox="0 0 16 16"><path d="M1.2 8 C3.6 4.2 12.4 4.2 14.8 8 C12.4 11.8 3.6 11.8 1.2 8 Z" fill="#f8f8f8" stroke="#2a2a2a" stroke-width="1"/><circle cx="8" cy="7.6" r="2.5" fill="#8a8a8a"/><circle cx="8" cy="7.6" r="1.3" fill="#111"/></svg>
<svg class="a" style="left:1231px;top:210px;" width="16" height="16" viewBox="0 0 16 16"><path d="M3.9 2 L8 6.1 L12.1 2 L14 3.9 L9.9 8 L14 12.1 L12.1 14 L8 9.9 L3.9 14 L2 12.1 L6.1 8 L2 3.9 Z" fill="#fff" stroke="#1a1a1a" stroke-width="1" stroke-linejoin="round"/></svg>
<div class="a t " style="left:1038px;top:251px;">Target:</div>
<div class="a w txt" style="left:1109px;top:249px;width:141px;height:20px;padding-left:20px">Armature</div>
<svg class="a" style="left:1114px;top:251px;" width="16" height="16" viewBox="0 0 16 16"><path d="M8.3 1.4 L14.3 4.1 V11.6 L8.3 14.8 L2.3 11.6 V4.1 Z" fill="#fff6e4" stroke="#2a1a06" stroke-width="1" stroke-linejoin="round"/><path d="M8.3 2.8 L12.5 4.7 L8.3 6.7 L4.1 4.7 Z" fill="#f7c47c"/><path d="M3.5 5.7 L7.7 7.7 V13.2 L3.5 11 Z" fill="#eda23e"/><path d="M8.9 7.7 L13.1 5.7 V11 L8.9 13.2 Z" fill="#b86a1a"/></svg>
<div class="a t " style="left:1038px;top:279px;">Bone</div>
<div class="a w txt" style="left:1109px;top:277px;width:141px;height:20px;padding-left:20px">IK</div>
<svg class="a" style="left:1114px;top:279px;" width="16" height="16" viewBox="0 0 16 16"><g fill="#2a2a2a" stroke="#2a2a2a"><line x1="4.6" y1="11.4" x2="11.4" y2="4.6" stroke-width="4.6"/><circle cx="3.2" cy="10" r="2.7"/><circle cx="6" cy="12.8" r="2.7"/><circle cx="10" cy="3.2" r="2.7"/><circle cx="12.8" cy="6" r="2.7"/></g><g fill="#f4f4f4" stroke="#f4f4f4"><line x1="4.6" y1="11.4" x2="11.4" y2="4.6" stroke-width="2.8"/><circle cx="3.2" cy="10" r="1.8" stroke="none"/><circle cx="6" cy="12.8" r="1.8" stroke="none"/><circle cx="10" cy="3.2" r="1.8" stroke="none"/><circle cx="12.8" cy="6" r="1.8" stroke="none"/></g></svg>
<div class="a t " style="left:1038px;top:307px;">Pole Target:</div>
<div class="a w txt" style="left:1109px;top:305px;width:141px;height:20px;padding-left:20px"></div>
<svg class="a" style="left:1114px;top:307px;" width="16" height="16" viewBox="0 0 16 16"><path d="M8.3 1.4 L14.3 4.1 V11.6 L8.3 14.8 L2.3 11.6 V4.1 Z" fill="#fff6e4" stroke="#2a1a06" stroke-width="1" stroke-linejoin="round"/><path d="M8.3 2.8 L12.5 4.7 L8.3 6.7 L4.1 4.7 Z" fill="#f7c47c"/><path d="M3.5 5.7 L7.7 7.7 V13.2 L3.5 11 Z" fill="#eda23e"/><path d="M8.9 7.7 L13.1 5.7 V11 L8.9 13.2 Z" fill="#b86a1a"/></svg>
<div class="a w num " style="left:1033px;top:333px;width:104px;height:20px;">Iterations: 500</div>
<svg class="a" style="left:1040.5px;top:339px" width="6" height="8" viewBox="0 0 6 8"><path d="M5 0.5 V7.5 L0.5 4 Z" fill="#6e6e6e"/></svg>
<svg class="a" style="left:1124px;top:339px" width="6" height="8" viewBox="0 0 6 8"><path d="M1 0.5 V7.5 L5.5 4 Z" fill="#6e6e6e"/></svg>
<div class="a chk" style="left:1148px;top:336px;width:14px;height:14px;"></div>
<svg class="a" style="left:1148px;top:332px" width="16" height="18" viewBox="0 0 16 18"><path d="M3.3 9.4 L6.3 13.2 L13.2 4.2" stroke="#fff" stroke-width="1.9" fill="none" stroke-linejoin="miter"/></svg>
<div class="a t wh" style="left:1167px;top:335px;">Use Tail</div>
<div class="a w num " style="left:1033px;top:355px;width:104px;height:20px;"><span style="letter-spacing:-0.68px">Chain Length: 2</span></div>
<svg class="a" style="left:1040.5px;top:361px" width="6" height="8" viewBox="0 0 6 8"><path d="M5 0.5 V7.5 L0.5 4 Z" fill="#6e6e6e"/></svg>
<svg class="a" style="left:1124px;top:361px" width="6" height="8" viewBox="0 0 6 8"><path d="M1 0.5 V7.5 L5.5 4 Z" fill="#6e6e6e"/></svg>
<div class="a chk" style="left:1148px;top:358px;width:14px;height:14px;"></div>
<svg class="a" style="left:1148px;top:354px" width="16" height="18" viewBox="0 0 16 18"><path d="M3.3 9.4 L6.3 13.2 L13.2 4.2" stroke="#fff" stroke-width="1.9" fill="none" stroke-linejoin="miter"/></svg>
<div class="a t wh" style="left:1167px;top:357px;">Stretch</div>
<div class="a t " style="left:1038px;top:385px;">Weight:</div>
<div class="a chk" style="left:1036px;top:414px;width:14px;height:14px;"></div>
<svg class="a" style="left:1036px;top:410px" width="16" height="18" viewBox="0 0 16 18"><path d="M3.3 9.4 L6.3 13.2 L13.2 4.2" stroke="#fff" stroke-width="1.9" fill="none" stroke-linejoin="miter"/></svg>
<div class="a w num sld" style="left:1053px;top:411px;width:84px;height:20px;">Posi: 1.000</div>
<div class="a chk" style="left:1148px;top:414px;width:14px;height:14px;"></div>
<div class="a w num sldd" style="left:1165px;top:411px;width:85px;height:20px;">Rota: 1.000</div>
<div class="a w num sld" style="left:1033px;top:439px;width:217px;height:20px;">Influence: 1.000</div>
<div class="a " style="left:0px;top:590px;width:1020px;height:27px;background:#6c6c6c;border-top:1px solid #858585;border-bottom:1px solid #111"></div>
<div class="a w menu" style="left:8px;top:593px;width:30px;height:20px;"></div>
<svg class="a" style="left:11px;top:595px;" width="16" height="16" viewBox="0 0 16 16"><path d="M8 1.2 L14.6 3 V10.4 L8 14.6 L1.4 10.4 V3 Z" fill="#f4f4f4" stroke="#161616" stroke-width="1.1" stroke-linejoin="round"/><path d="M8.2 4.8 L14 3.6 V10.1 L8.2 13.8 Z" fill="#7c7c7c"/><path d="M2.2 3.8 L7.6 4.8 V13.6 L2.2 10 Z" fill="#c8c8c8"/><path d="M2.6 3 L8 1.9 L13.6 3 L8 4.2 Z" fill="#fff"/></svg>
<svg class="a" style="left:27px;top:596px" width="8" height="14" viewBox="0 0 8 14"><path d="M4 1 L7 6 H1 Z M4 13 L7 8 H1 Z" fill="#8f8f8f"/></svg>
<svg class="a" style="left:45px;top:597px" width="12" height="12" viewBox="0 0 12 12"><circle cx="6.3" cy="6.3" r="3.9" fill="#8c8c8c" stroke="#b0b0b0" stroke-width="1"/><rect x="4" y="5.7" width="4.6" height="1.3" fill="#333"/></svg>
<div class="a t " style="left:70px;top:595px;">View</div>
<div class="a t " style="left:109px;top:595px;">Select</div>
<div class="a t " style="left:155px;top:595px;">Pose</div>
<div class="a w menu" style="left:191px;top:593px;width:126px;height:20px;padding-left:21px">Pose Mode</div>
<svg class="a" style="left:194px;top:595px;" width="16" height="16" viewBox="0 0 16 16"><g stroke="#f4f4f4" stroke-width="1.5" fill="none" stroke-linecap="round" stroke-linejoin="round"><path d="M2.2 2.4 L5.6 6 H10 L13.6 2.4"/><path d="M8.6 6 L6.4 10 L4.4 15"/><path d="M7 9 L10.6 10 L13.6 8.8"/></g><circle cx="7.6" cy="3" r="1.7" fill="#f4f4f4"/><rect x="0.4" y="0.4" width="3.2" height="3.2" fill="#fbd8a8" stroke="#e87c10" stroke-width="1"/><rect x="12.2" y="0.4" width="3.2" height="3.2" fill="#fbd8a8" stroke="#e87c10" stroke-width="1"/></svg>
<svg class="a" style="left:303px;top:596px" width="8" height="14" viewBox="0 0 8 14"><path d="M4 1 L7 6 H1 Z M4 13 L7 8 H1 Z" fill="#8f8f8f"/></svg>
<div class="a w menu" style="left:322px;top:593px;width:36px;height:20px;"></div>
<svg class="a" style="left:326px;top:595px;" width="16" height="16" viewBox="0 0 16 16"><circle cx="8" cy="8" r="6.3" fill="url(#sg)" stroke="#222" stroke-width="0.7"/></svg>
<svg class="a" style="left:345px;top:596px" width="8" height="14" viewBox="0 0 8 14"><path d="M4 1 L7 6 H1 Z M4 13 L7 8 H1 Z" fill="#8f8f8f"/></svg>
<div class="a w menu rl" style="left:362px;top:593px;width:36px;height:20px;"></div>
<svg class="a" style="left:365px;top:595px;" width="16" height="16" viewBox="0 0 16 16"><circle cx="6.2" cy="4.6" r="4.3" fill="url(#sg)" stroke="#222" stroke-width="0.7"/><circle cx="10.8" cy="10.8" r="4.3" fill="url(#sg)" stroke="#222" stroke-width="0.7"/><rect x="6" y="6" width="3.6" height="3.6" fill="#fff" stroke="#1450d8" stroke-width="1.2"/></svg>
<svg class="a" style="left:385px;top:596px" width="8" height="14" viewBox="0 0 8 14"><path d="M4 1 L7 6 H1 Z M4 13 L7 8 H1 Z" fill="#8f8f8f"/></svg>
<div class="a w tog rr" style="left:397px;top:593px;width:20px;height:20px;padding:0"></div>
<svg class="a" style="left:398px;top:595px;" width="16" height="16" viewBox="0 0 16 16"><g fill="#fff" stroke="#2858c8" stroke-width="1"><circle cx="3" cy="3" r="1.5"/><circle cx="8" cy="3" r="1.5"/><circle cx="13" cy="3" r="1.5"/></g><path d="M0.8 10.6 L4.6 7.2 V9.4 H11.4 V7.2 L15.2 10.6 L11.4 14 V11.8 H4.6 V14 Z" fill="#fff" stroke="#222" stroke-width="0.9" stroke-linejoin="round"/></svg>
<div class="a w togs rl" style="left:422px;top:593px;width:20px;height:20px;padding:0"></div>
<svg class="a" style="left:424px;top:595px;" width="16" height="16" viewBox="0 0 16 16"><g stroke-linecap="round" stroke-width="2"><path d="M8 10 L1.8 14" stroke="#e03a24"/><path d="M8 10 L14.2 14" stroke="#7ad020"/><path d="M8 10 V1.6" stroke="#3a76e8"/></g><circle cx="8" cy="1.8" r="1" fill="#c8dcff"/><circle cx="8" cy="10" r="1.1" fill="#f0f0d0"/></svg>
<div class="a w togs r0" style="left:441px;top:593px;width:21px;height:20px;padding:0"></div>
<svg class="a" style="left:444px;top:595px;" width="16" height="16" viewBox="0 0 16 16"><path d="M1.4 13 L9.6 5.2 L7.4 3 L14.8 1.2 L13 8.6 L10.8 6.4 L2.8 14.4 Z" fill="#5a90ee" stroke="#0c2a78" stroke-width="0.9" stroke-linejoin="round"/><path d="M2.6 13 L10.4 5.6" stroke="#b4d0ff" stroke-width="0.9"/></svg>
<div class="a w tog r0" style="left:461px;top:593px;width:21px;height:20px;padding:0"></div>
<svg class="a" style="left:464px;top:595px;" width="16" height="16" viewBox="0 0 16 16"><path d="M2.4 14.2 C2.2 8 6 3 13.6 2.4" fill="none" stroke="#5a6fa0" stroke-width="3.2" stroke-linecap="round"/><path d="M2.4 14.2 C2.2 8 6 3 13.6 2.4" fill="none" stroke="#9cb4e6" stroke-width="1.8" stroke-linecap="round"/></svg>
<div class="a w tog r0" style="left:481px;top:593px;width:21px;height:20px;padding:0"></div>
<svg class="a" style="left:484px;top:595px;" width="16" height="16" viewBox="0 0 16 16"><path d="M1.8 14 L8.4 7.4" stroke="#5a6fa0" stroke-width="3" stroke-linecap="round"/><path d="M1.8 14 L8.4 7.4" stroke="#9cb4e6" stroke-width="1.6" stroke-linecap="round"/><rect x="7.2" y="1.6" width="7" height="7" fill="#9cb4e6" stroke="#5a6fa0" stroke-width="0.9"/></svg>
<div class="a w menu rr" style="left:501px;top:593px;width:72px;height:20px;padding-left:5px">Global</div>
<svg class="a" style="left:558px;top:596px" width="8" height="14" viewBox="0 0 8 14"><path d="M4 1 L7 6 H1 Z M4 13 L7 8 H1 Z" fill="#8f8f8f"/></svg>
<div class="a " style="left:577px;top:593px;width:51px;height:20px;border:1px solid #3a3a3a;border-radius:4px;background:#999;overflow:hidden"></div>
<div class="a " style="left:587px;top:594px;width:1px;height:18px;background:#4a4a4a"></div>
<div class="a " style="left:597px;top:594px;width:1px;height:18px;background:#4a4a4a"></div>
<div class="a " style="left:607px;top:594px;width:1px;height:18px;background:#4a4a4a"></div>
<div class="a " style="left:617px;top:594px;width:1px;height:18px;background:#4a4a4a"></div>
<div class="a " style="left:578px;top:603px;width:49px;height:1px;background:#4a4a4a"></div>
<div class="a " style="left:632px;top:593px;width:51px;height:20px;border:1px solid #3a3a3a;border-radius:4px;background:#999;overflow:hidden"></div>
<div class="a " style="left:642px;top:594px;width:1px;height:18px;background:#4a4a4a"></div>
<div class="a " style="left:652px;top:594px;width:1px;height:18px;background:#4a4a4a"></div>
<div class="a " style="left:662px;top:594px;width:1px;height:18px;background:#4a4a4a"></div>
<div class="a " style="left:672px;top:594px;width:1px;height:18px;background:#4a4a4a"></div>
<div class="a " style="left:633px;top:603px;width:49px;height:1px;background:#4a4a4a"></div>
<div class="a " style="left:578px;top:594px;width:9px;height:9px;background:#646464;border-radius:3px 0 0 0"></div>
<svg class="a" style="left:580px;top:595px" width="6" height="6" viewBox="0 0 6 6"><circle cx="3" cy="3" r="2.2" fill="#f0a030" stroke="#5a3a10" stroke-width="0.8"/></svg>
<div class="a w tog" style="left:687px;top:593px;width:21px;height:20px;padding:0;background:#838383"></div>
<svg class="a" style="left:690px;top:595px;" width="16" height="16" viewBox="0 0 16 16"><rect x="1.6" y="1.6" width="10.4" height="11.6" rx="1" fill="#c8c8c8" stroke="#2a2a2a" stroke-width="1"/><rect x="2.6" y="2.6" width="8.4" height="8" fill="#a4a4a4"/><path d="M3.6 11.8 H9" stroke="#333" stroke-width="1"/><g fill="none"><rect x="10.6" y="4.4" width="3.8" height="5.2" rx="1.9" stroke="#1a1a1a" stroke-width="2.6"/><rect x="10.6" y="8.6" width="3.8" height="5.4" rx="1.9" stroke="#1a1a1a" stroke-width="2.6"/><rect x="10.6" y="4.4" width="3.8" height="5.2" rx="1.9" stroke="#f2f2f2" stroke-width="1.1"/><rect x="10.6" y="8.6" width="3.8" height="5.4" rx="1.9" stroke="#f2f2f2" stroke-width="1.1"/></g></svg>
<div class="a w tog rl" style="left:712px;top:593px;width:21px;height:20px;padding:0"></div>
<svg class="a" style="left:714px;top:595px;" width="16" height="16" viewBox="0 0 16 16"><g transform="translate(1.2,1.2) scale(0.85) rotate(-40 8 8)" fill="none"><path d="M3 13.6 V7 A5 5 0 0 1 13 7 V13.6" stroke="#5e5e5e" stroke-width="3.8"/><path d="M3 13.6 V7 A5 5 0 0 1 13 7 V13.6" stroke="#a8a8a8" stroke-width="2.2"/><path d="M3 13.4 V11.4 M13 13.4 V11.4" stroke="#e0e0e0" stroke-width="2.2"/></g></svg>
<div class="a w menu rr" style="left:732px;top:593px;width:36px;height:20px;"></div>
<svg class="a" style="left:735px;top:595px;" width="16" height="16" viewBox="0 0 16 16"><path d="M5.4 3.4 V15 M10.6 3.4 V15 M1.4 7.4 H13 M1.4 12.4 H13" stroke="#f4f4f4" stroke-width="1.4"/><circle cx="4.2" cy="4.2" r="3.2" fill="#fff" stroke="#1a56e0" stroke-width="1.5"/><circle cx="4.2" cy="4.2" r="1" fill="#1a56e0"/><path d="M15.2 5 V13" stroke="#f4f4f4" stroke-width="1.2"/></svg>
<svg class="a" style="left:755px;top:596px" width="8" height="14" viewBox="0 0 8 14"><path d="M4 1 L7 6 H1 Z M4 13 L7 8 H1 Z" fill="#8f8f8f"/></svg>
<div class="a w tool rl" style="left:772px;top:593px;width:21px;height:20px;padding:0"></div>
<svg class="a" style="left:774px;top:595px;" width="16" height="16" viewBox="0 0 16 16"><rect x="1" y="4" width="12.6" height="10" rx="0.8" fill="#5e5e5e" stroke="#161616" stroke-width="0.9"/><rect x="1.5" y="4.4" width="11.6" height="2.8" fill="#d8d8d8"/><rect x="1.8" y="2.6" width="3" height="1.6" fill="#d0d0d0" stroke="#222" stroke-width="0.6"/><circle cx="3.6" cy="5.8" r="0.8" fill="#e01818"/><circle cx="8" cy="10" r="3.5" fill="#c4c4c4" stroke="#1a1a1a" stroke-width="0.8"/><circle cx="8" cy="10" r="2.1" fill="#4a1c1c"/><circle cx="7.2" cy="9.2" r="0.8" fill="#d8b0b0"/><circle cx="12.6" cy="3.6" r="3" fill="#f4d23a" stroke="#a07a08" stroke-width="0.6"/><path d="M12.6 1.6 V5.6 M10.6 3.6 H14.6" stroke="#fff" stroke-width="1.2"/></svg>
<div class="a w tool rr" style="left:792px;top:593px;width:20px;height:20px;padding:0"></div>
<svg class="a" style="left:794px;top:595px;" width="16" height="16" viewBox="0 0 16 16"><rect x="1.6" y="7" width="13" height="8" fill="#3a3a3a" stroke="#111" stroke-width="0.8"/><path d="M1.6 9 H14.6" stroke="#d8d8d8" stroke-width="1"/><path d="M4 11 H12 M4 13 H12" stroke="#8a8a8a" stroke-width="0.8"/><g transform="rotate(-22 2 6.6)"><rect x="1.6" y="3.4" width="13" height="3" fill="#fafafa" stroke="#111" stroke-width="0.8"/><path d="M4 3.4 L5.6 6.4 H7.4 L5.8 3.4 Z M8 3.4 L9.6 6.4 H11.4 L9.8 3.4 Z M12 3.4 L13.6 6.4 H14.6 V4.6 L13.8 3.4 Z" fill="#111"/></g><path d="M0.6 4.6 L3 5.4 V8.4 L1 8.6 Z" fill="#4a80e0" stroke="#12306e" stroke-width="0.5"/></svg>
<div class="a w tool rl" style="left:817px;top:593px;width:21px;height:20px;padding:0"></div>
<svg class="a" style="left:819px;top:595px;" width="16" height="16" viewBox="0 0 16 16"><g opacity="1.0"><rect x="4.6" y="2.4" width="10" height="10.6" rx="0.8" fill="#c8b88c" stroke="#3a3222" stroke-width="0.9"/><rect x="7" y="0.8" width="5.2" height="3" rx="0.8" fill="#e8e8e8" stroke="#2a2a2a" stroke-width="0.8"/></g><path d="M1.2 15 L8 8.2 M8.6 12 V7.6 H4.2" stroke="#1a1a1a" stroke-width="3.2" fill="none"/><path d="M1.4 14.8 L8 8.2 M8.6 11.6 V7.6 H4.6" stroke="#fff" stroke-width="1.5" fill="none"/></svg>
<div class="a w tool r0" style="left:837px;top:593px;width:21px;height:20px;padding:0"></div>
<svg class="a" style="left:839px;top:595px;" width="16" height="16" viewBox="0 0 16 16"><g transform="translate(-3.6,0)"><g opacity="1.0"><rect x="4.6" y="2.4" width="10" height="10.6" rx="0.8" fill="#c8b88c" stroke="#3a3222" stroke-width="0.9"/><rect x="7" y="0.8" width="5.2" height="3" rx="0.8" fill="#e8e8e8" stroke="#2a2a2a" stroke-width="0.8"/></g></g><path d="M8 8 L14.6 14.6 M15 10.4 V15 H10.4" stroke="#1a1a1a" stroke-width="3.2" fill="none"/><path d="M8.2 8.2 L14.6 14.6 M15 10.8 V15 H10.8" stroke="#fff" stroke-width="1.5" fill="none"/></svg>
<div class="a w tool rr" style="left:857px;top:593px;width:21px;height:20px;padding:0"></div>
<svg class="a" style="left:859px;top:595px;" width="16" height="16" viewBox="0 0 16 16"><g opacity="1"><rect x="4.6" y="2.4" width="10" height="10.6" rx="0.8" fill="#a8a8a0" stroke="#3a3222" stroke-width="0.9"/><rect x="7" y="0.8" width="5.2" height="3" rx="0.8" fill="#e8e8e8" stroke="#2a2a2a" stroke-width="0.8"/></g><path d="M15 1 V15" stroke="#3a3a1a" stroke-width="2.4" stroke-dasharray="2.6 1.2"/><path d="M15 1 V15" stroke="#f0d84a" stroke-width="1.3" stroke-dasharray="2.2 1.6" stroke-dashoffset="-0.2"/><path d="M9 8 L2 15 M1.6 10.6 V15.2 H6.2" stroke="#16306e" stroke-width="3.2" fill="none"/><path d="M8.8 8.2 L2.2 14.8 M1.6 11 V15.2 H5.8" stroke="#8ab4f4" stroke-width="1.5" fill="none"/></svg>
<div class="a " style="left:0px;top:617px;width:1020px;height:65px;background:#727272"></div>
<div class="a " style="left:0px;top:617px;width:173px;height:65px;background:#454545"></div>
<div class="a " style="left:920px;top:617px;width:100px;height:65px;background:#454545"></div>
<svg class="a" style="left:0;top:617px" width="1020" height="65" viewBox="0 0 1020 65"><path d="M22.5 0 V65 M52.4 0 V65 M82.3 0 V65 M112.2 0 V65 M142.1 0 V65 M172.0 0 V65 M201.9 0 V65 M231.8 0 V65 M261.7 0 V65 M291.6 0 V65 M321.5 0 V65 M351.4 0 V65 M381.3 0 V65 M411.2 0 V65 M441.1 0 V65 M471.0 0 V65 M500.9 0 V65 M530.8 0 V65 M560.7 0 V65 M590.6 0 V65 M620.5 0 V65 M650.4 0 V65 M680.3 0 V65 M710.2 0 V65 M740.1 0 V65 M770.0 0 V65 M799.9 0 V65 M829.8 0 V65 M859.7 0 V65 M889.6 0 V65 M919.5 0 V65 M949.4 0 V65 M979.3 0 V65 M1009.2 0 V65" stroke="#000" stroke-width="1" fill="none" opacity=".13"/></svg>
<div class="a " style="left:174px;top:617px;width:3px;height:65px;background:#62c044"></div>
<div class="a " style="left:0px;top:681px;width:1019px;height:1px;background:#5a5a5a"></div>
<div class="a " style="left:3px;top:682px;width:1011px;height:13px;border:1px solid #3e3e3e;border-radius:7px;background:linear-gradient(#8d8d8d,#777)"></div>
<svg class="a" style="left:4px;top:683px" width="12" height="12" viewBox="0 0 12 12"><circle cx="5.6" cy="5.5" r="3.7" fill="#6a6a6a"/></svg>
<svg class="a" style="left:1002px;top:683px" width="12" height="12" viewBox="0 0 12 12"><circle cx="5.8" cy="5.5" r="3.7" fill="#6a6a6a"/></svg>
<div class="a t" style="left:33.0px;top:680px;width:40px;text-align:center;letter-spacing:-0.35px;font-size:11px">-40</div>
<div class="a t" style="left:92.1px;top:680px;width:40px;text-align:center;letter-spacing:-0.35px;font-size:11px">-20</div>
<div class="a t" style="left:154.8px;top:680px;width:40px;text-align:center;letter-spacing:-0.35px;font-size:11px">0</div>
<div class="a t" style="left:213.9px;top:680px;width:40px;text-align:center;letter-spacing:-0.35px;font-size:11px">20</div>
<div class="a t" style="left:273.0px;top:680px;width:40px;text-align:center;letter-spacing:-0.35px;font-size:11px">40</div>
<div class="a t" style="left:332.1px;top:680px;width:40px;text-align:center;letter-spacing:-0.35px;font-size:11px">60</div>
<div class="a t" style="left:391.2px;top:680px;width:40px;text-align:center;letter-spacing:-0.35px;font-size:11px">80</div>
<div class="a t" style="left:450.4px;top:680px;width:40px;text-align:center;letter-spacing:-0.35px;font-size:11px">100</div>
<div class="a t" style="left:509.5px;top:680px;width:40px;text-align:center;letter-spacing:-0.35px;font-size:11px">120</div>
<div class="a t" style="left:568.6px;top:680px;width:40px;text-align:center;letter-spacing:-0.35px;font-size:11px">140</div>
<div class="a t" style="left:627.7px;top:680px;width:40px;text-align:center;letter-spacing:-0.35px;font-size:11px">160</div>
<div class="a t" style="left:686.8px;top:680px;width:40px;text-align:center;letter-spacing:-0.35px;font-size:11px">180</div>
<div class="a t" style="left:746.0px;top:680px;width:40px;text-align:center;letter-spacing:-0.35px;font-size:11px">200</div>
<div class="a t" style="left:805.1px;top:680px;width:40px;text-align:center;letter-spacing:-0.35px;font-size:11px">220</div>
<div class="a t" style="left:864.2px;top:680px;width:40px;text-align:center;letter-spacing:-0.35px;font-size:11px">240</div>
<div class="a t" style="left:923.3px;top:680px;width:40px;text-align:center;letter-spacing:-0.35px;font-size:11px">260</div>
<div class="a " style="left:0px;top:698px;width:1020px;height:25px;background:#6c6c6c;border-top:1px solid #858585"></div>
<div class="a w menu" style="left:8px;top:702px;width:30px;height:20px;"></div>
<svg class="a" style="left:11px;top:704px;" width="16" height="16" viewBox="0 0 16 16"><circle cx="8" cy="8" r="6.4" fill="#f4f4f4" stroke="#1c1c1c" stroke-width="1"/><g fill="#9a9a9a"><circle cx="8" cy="3" r="0.6"/><circle cx="13" cy="8" r="0.6"/><circle cx="8" cy="13" r="0.6"/><circle cx="3" cy="8" r="0.6"/><circle cx="10.5" cy="3.7" r="0.5"/><circle cx="12.3" cy="5.5" r="0.5"/><circle cx="12.3" cy="10.5" r="0.5"/><circle cx="10.5" cy="12.3" r="0.5"/><circle cx="5.5" cy="12.3" r="0.5"/><circle cx="3.7" cy="10.5" r="0.5"/><circle cx="3.7" cy="5.5" r="0.5"/><circle cx="5.5" cy="3.7" r="0.5"/></g><path d="M6.6 8.6 L10.6 4.4" stroke="#111" stroke-width="1.2"/><path d="M6.6 8.4 L9 11.8" stroke="#e01818" stroke-width="1.2"/></svg>
<svg class="a" style="left:27px;top:705px" width="8" height="14" viewBox="0 0 8 14"><path d="M4 1 L7 6 H1 Z M4 13 L7 8 H1 Z" fill="#8f8f8f"/></svg>
<svg class="a" style="left:45px;top:706px" width="12" height="12" viewBox="0 0 12 12"><circle cx="6.3" cy="6.3" r="3.9" fill="#8c8c8c" stroke="#b0b0b0" stroke-width="1"/><rect x="4" y="5.7" width="4.6" height="1.3" fill="#333"/></svg>
<div class="a t " style="left:70px;top:704px;">View</div>
<div class="a t " style="left:109px;top:704px;">Marker</div>
<div class="a t " style="left:159px;top:704px;">Frame</div>
<div class="a t " style="left:206px;top:704px;">Playback</div>
<div class="a w tog" style="left:264px;top:702px;width:20px;height:20px;padding:0"></div>
<svg class="a" style="left:266px;top:704px;" width="16" height="16" viewBox="0 0 16 16"><circle cx="8" cy="8" r="6.4" fill="#f4f4f4" stroke="#1c1c1c" stroke-width="1"/><path d="M7.6 8 V1.8 A6.2 6.2 0 0 1 14.2 8 Z" fill="#f8a000" stroke="#1c1c1c" stroke-width="0.8"/><g fill="#9a9a9a"><circle cx="8" cy="13" r="0.6"/><circle cx="3" cy="8" r="0.6"/><circle cx="5.5" cy="12.3" r="0.5"/><circle cx="3.7" cy="10.5" r="0.5"/><circle cx="3.7" cy="5.5" r="0.5"/><circle cx="10.5" cy="12.3" r="0.5"/></g><path d="M7.6 8.2 L10 11.6" stroke="#e01818" stroke-width="1.2"/></svg>
<div class="a w num rl" style="left:289px;top:702px;width:117px;height:20px;">Start: 1</div>
<svg class="a" style="left:296.5px;top:708px" width="6" height="8" viewBox="0 0 6 8"><path d="M5 0.5 V7.5 L0.5 4 Z" fill="#6e6e6e"/></svg>
<svg class="a" style="left:393px;top:708px" width="6" height="8" viewBox="0 0 6 8"><path d="M1 0.5 V7.5 L5.5 4 Z" fill="#6e6e6e"/></svg>
<div class="a w num rr" style="left:405px;top:702px;width:112px;height:20px;">End: 250</div>
<svg class="a" style="left:412.5px;top:708px" width="6" height="8" viewBox="0 0 6 8"><path d="M5 0.5 V7.5 L0.5 4 Z" fill="#6e6e6e"/></svg>
<svg class="a" style="left:504px;top:708px" width="6" height="8" viewBox="0 0 6 8"><path d="M1 0.5 V7.5 L5.5 4 Z" fill="#6e6e6e"/></svg>
<div class="a w num " style="left:522px;top:702px;width:89px;height:20px;">1</div>
<svg class="a" style="left:529.5px;top:708px" width="6" height="8" viewBox="0 0 6 8"><path d="M5 0.5 V7.5 L0.5 4 Z" fill="#6e6e6e"/></svg>
<svg class="a" style="left:598px;top:708px" width="6" height="8" viewBox="0 0 6 8"><path d="M1 0.5 V7.5 L5.5 4 Z" fill="#6e6e6e"/></svg>
<div class="a w tool" style="left:628px;top:702px;width:21px;height:20px;border-radius:4px 0 0 4px;padding:0"></div>
<svg class="a" style="left:630px;top:704px;" width="16" height="16" viewBox="0 0 16 16"><path d="M8.4 3.2 V12.8 L3 8 Z M14.6 3.2 V12.8 L9.2 8 Z" fill="#f4f4f4" stroke="#1c1c1c" stroke-width="0.9" stroke-linejoin="round"/><rect x="1" y="3.2" width="2" height="9.6" fill="#f4f4f4" stroke="#1c1c1c" stroke-width="0.9" stroke-linejoin="round"/></svg>
<div class="a w tool" style="left:648px;top:702px;width:21px;height:20px;border-radius:0;padding:0"></div>
<svg class="a" style="left:650px;top:704px;" width="16" height="16" viewBox="0 0 16 16"><path d="M8 3.2 V12.8 L2.2 8 Z M14 3.2 V12.8 L8.2 8 Z" fill="#f4f4f4" stroke="#1c1c1c" stroke-width="0.9" stroke-linejoin="round"/></svg>
<div class="a w tool" style="left:668px;top:702px;width:21px;height:20px;border-radius:0;padding:0"></div>
<svg class="a" style="left:670px;top:704px;" width="16" height="16" viewBox="0 0 16 16"><path d="M14 1.2 V14.8 L2 8 Z" fill="#f4f4f4" stroke="#1c1c1c" stroke-width="0.9" stroke-linejoin="round"/></svg>
<div class="a w tool" style="left:688px;top:702px;width:21px;height:20px;border-radius:0;padding:0"></div>
<svg class="a" style="left:690px;top:704px;" width="16" height="16" viewBox="0 0 16 16"><path d="M2 1.2 V14.8 L14 8 Z" fill="#f4f4f4" stroke="#1c1c1c" stroke-width="0.9" stroke-linejoin="round"/></svg>
<div class="a w tool" style="left:708px;top:702px;width:21px;height:20px;border-radius:0;padding:0"></div>
<svg class="a" style="left:710px;top:704px;" width="16" height="16" viewBox="0 0 16 16"><path d="M8 3.2 V12.8 L13.8 8 Z M2 3.2 V12.8 L7.8 8 Z" fill="#f4f4f4" stroke="#1c1c1c" stroke-width="0.9" stroke-linejoin="round"/></svg>
<div class="a w tool" style="left:728px;top:702px;width:20px;height:20px;border-radius:0 4px 4px 0;padding:0"></div>
<svg class="a" style="left:730px;top:704px;" width="16" height="16" viewBox="0 0 16 16"><path d="M7.6 3.2 V12.8 L13 8 Z M1.4 3.2 V12.8 L6.8 8 Z" fill="#f4f4f4" stroke="#1c1c1c" stroke-width="0.9" stroke-linejoin="round"/><rect x="13" y="3.2" width="2" height="9.6" fill="#f4f4f4" stroke="#1c1c1c" stroke-width="0.9" stroke-linejoin="round"/></svg>
<div class="a w menu" style="left:753px;top:702px;width:112px;height:20px;padding-left:5px">No Sync</div>
<svg class="a" style="left:851px;top:705px" width="8" height="14" viewBox="0 0 8 14"><path d="M4 1 L7 6 H1 Z M4 13 L7 8 H1 Z" fill="#8f8f8f"/></svg>
<div class="a w tool" style="left:881px;top:702px;width:20px;height:20px;padding:0"></div>
<svg class="a" style="left:883px;top:704px;" width="16" height="16" viewBox="0 0 16 16"><circle cx="8" cy="8" r="4.4" fill="#e83a10" stroke="#f4c8b8" stroke-width="1"/><circle cx="8" cy="8" r="5" fill="none" stroke="#6a1a08" stroke-width="0.5"/></svg>
<div class="a w txt rl" style="left:906px;top:702px;width:106px;height:20px;"></div>
<svg class="a" style="left:909px;top:704px;" width="16" height="16" viewBox="0 0 16 16"><g fill="none" stroke-linecap="round"><path d="M6.4 12.4 L14.4 5.6 M12.4 7.4 L13.8 9 M14 5.8 L15.2 7.2" stroke="#2a2a2a" stroke-width="2.8"/><circle cx="5.6" cy="12.8" r="1.8" stroke="#2a2a2a" stroke-width="2.8"/><path d="M6.4 12.4 L14.4 5.6 M12.4 7.4 L13.8 9 M14 5.8 L15.2 7.2" stroke="#f2f2f2" stroke-width="1.4"/><circle cx="5.6" cy="12.8" r="1.8" stroke="#f2f2f2" stroke-width="1.4"/><path d="M3.2 9.6 V1 H5.4 M3.2 3.4 H4.8" stroke="#4a3c08" stroke-width="2.8"/><circle cx="3.2" cy="11.8" r="2" stroke="#4a3c08" stroke-width="2.8"/><path d="M3.2 9.6 V1 H5.4 M3.2 3.4 H4.8" stroke="#f2de7c" stroke-width="1.4"/><circle cx="3.2" cy="11.8" r="2" stroke="#f2de7c" stroke-width="1.4"/></g></svg>
<div class="a w tog r0" style="left:1011px;top:702px;width:9px;height:20px;padding:0;border-right:0"></div>
<svg class="a" style="left:1012px;top:711px" width="8" height="8" viewBox="0 0 8 8"><circle cx="4.2" cy="4.2" r="2.6" fill="#fff" stroke="#222" stroke-width="1"/><circle cx="4.2" cy="4.2" r="0.9" fill="#222"/></svg>
<div class="a " style="left:1019px;top:590px;width:1px;height:133px;background:#111"></div>
<svg class="a" style="left:1007px;top:28px" width="12" height="12" viewBox="0 0 12 12"><path d="M0 0 L12 12" stroke="#a2a2a2" stroke-width="1.3"/><path d="M2.2 0 L12 9.8" stroke="#2c2c2c" stroke-width="1.3"/><path d="M4.4 0 L12 7.6" stroke="#a2a2a2" stroke-width="1.3"/><path d="M6.6 0 L12 5.4" stroke="#2c2c2c" stroke-width="1.3"/><path d="M8.8 0 L12 3.1999999999999993" stroke="#a2a2a2" stroke-width="1.3"/><path d="M10.6 0 L12 1.4000000000000004" stroke="#2c2c2c" stroke-width="1.3"/></svg>
<svg class="a" style="left:1264px;top:105px" width="12" height="12" viewBox="0 0 12 12"><path d="M0 0 L12 12" stroke="#a2a2a2" stroke-width="1.3"/><path d="M2.2 0 L12 9.8" stroke="#2c2c2c" stroke-width="1.3"/><path d="M4.4 0 L12 7.6" stroke="#a2a2a2" stroke-width="1.3"/><path d="M6.6 0 L12 5.4" stroke="#2c2c2c" stroke-width="1.3"/><path d="M8.8 0 L12 3.1999999999999993" stroke="#a2a2a2" stroke-width="1.3"/><path d="M10.6 0 L12 1.4000000000000004" stroke="#2c2c2c" stroke-width="1.3"/></svg>
<svg class="a" style="left:1007px;top:617px" width="12" height="12" viewBox="0 0 12 12"><path d="M0 0 L12 12" stroke="#a2a2a2" stroke-width="1.3"/><path d="M2.2 0 L12 9.8" stroke="#2c2c2c" stroke-width="1.3"/><path d="M4.4 0 L12 7.6" stroke="#a2a2a2" stroke-width="1.3"/><path d="M6.6 0 L12 5.4" stroke="#2c2c2c" stroke-width="1.3"/><path d="M8.8 0 L12 3.1999999999999993" stroke="#a2a2a2" stroke-width="1.3"/><path d="M10.6 0 L12 1.4000000000000004" stroke="#2c2c2c" stroke-width="1.3"/></svg>
<svg class="a" style="left:0px;top:15px" width="12" height="12" viewBox="0 0 12 12"><path d="M0 0 L12 12" stroke="#2c2c2c" stroke-width="1.3"/><path d="M0 2.2 L9.8 12" stroke="#a2a2a2" stroke-width="1.3"/><path d="M0 4.4 L7.6 12" stroke="#2c2c2c" stroke-width="1.3"/><path d="M0 6.6 L5.4 12" stroke="#a2a2a2" stroke-width="1.3"/><path d="M0 8.8 L3.1999999999999993 12" stroke="#2c2c2c" stroke-width="1.3"/><path d="M0 10.6 L1.4000000000000004 12" stroke="#a2a2a2" stroke-width="1.3"/></svg>
<svg class="a" style="left:0px;top:604px" width="12" height="12" viewBox="0 0 12 12"><path d="M0 0 L12 12" stroke="#2c2c2c" stroke-width="1.3"/><path d="M0 2.2 L9.8 12" stroke="#a2a2a2" stroke-width="1.3"/><path d="M0 4.4 L7.6 12" stroke="#2c2c2c" stroke-width="1.3"/><path d="M0 6.6 L5.4 12" stroke="#a2a2a2" stroke-width="1.3"/><path d="M0 8.8 L3.1999999999999993 12" stroke="#2c2c2c" stroke-width="1.3"/><path d="M0 10.6 L1.4000000000000004 12" stroke="#a2a2a2" stroke-width="1.3"/></svg>
<svg class="a" style="left:0px;top:711px" width="12" height="12" viewBox="0 0 12 12"><path d="M0 0 L12 12" stroke="#2c2c2c" stroke-width="1.3"/><path d="M0 2.2 L9.8 12" stroke="#a2a2a2" stroke-width="1.3"/><path d="M0 4.4 L7.6 12" stroke="#2c2c2c" stroke-width="1.3"/><path d="M0 6.6 L5.4 12" stroke="#a2a2a2" stroke-width="1.3"/><path d="M0 8.8 L3.1999999999999993 12" stroke="#2c2c2c" stroke-width="1.3"/><path d="M0 10.6 L1.4000000000000004 12" stroke="#a2a2a2" stroke-width="1.3"/></svg>
<svg class="a" style="left:1020px;top:92px" width="12" height="12" viewBox="0 0 12 12"><path d="M0 0 L12 12" stroke="#2c2c2c" stroke-width="1.3"/><path d="M0 2.2 L9.8 12" stroke="#a2a2a2" stroke-width="1.3"/><path d="M0 4.4 L7.6 12" stroke="#2c2c2c" stroke-width="1.3"/><path d="M0 6.6 L5.4 12" stroke="#a2a2a2" stroke-width="1.3"/><path d="M0 8.8 L3.1999999999999993 12" stroke="#2c2c2c" stroke-width="1.3"/><path d="M0 10.6 L1.4000000000000004 12" stroke="#a2a2a2" stroke-width="1.3"/></svg>
<svg class="a" style="left:1020px;top:711px" width="12" height="12" viewBox="0 0 12 12"><path d="M0 0 L12 12" stroke="#2c2c2c" stroke-width="1.3"/><path d="M0 2.2 L9.8 12" stroke="#a2a2a2" stroke-width="1.3"/><path d="M0 4.4 L7.6 12" stroke="#2c2c2c" stroke-width="1.3"/><path d="M0 6.6 L5.4 12" stroke="#a2a2a2" stroke-width="1.3"/><path d="M0 8.8 L3.1999999999999993 12" stroke="#2c2c2c" stroke-width="1.3"/><path d="M0 10.6 L1.4000000000000004 12" stroke="#a2a2a2" stroke-width="1.3"/></svg>
</div>
</body></html>
